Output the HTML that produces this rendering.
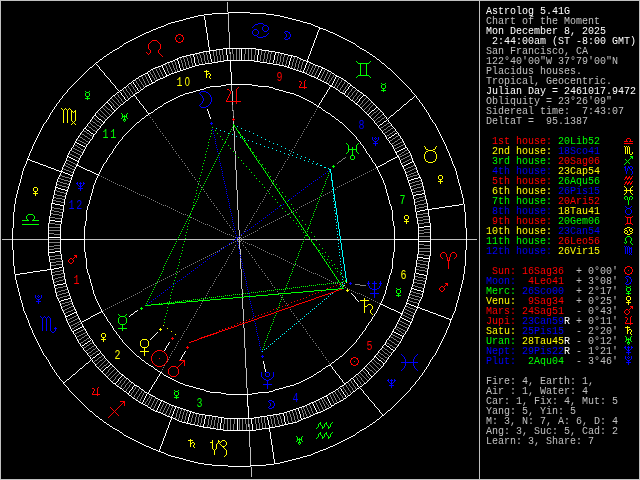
<!DOCTYPE html>
<html><head><meta charset="utf-8"><title>Astrolog 5.41G</title>
<style>
html,body{margin:0;padding:0;background:#000;overflow:hidden}
svg{display:block;will-change:transform}
.sb{font-family:"Liberation Mono",monospace;font-size:10px;white-space:pre}
.hn{font-family:"Liberation Mono",monospace;font-size:13.5px;text-anchor:middle;stroke-width:0}
.hz{font-family:"Liberation Sans",sans-serif;font-size:12.5px}
</style></head><body>
<svg width="640" height="480" viewBox="0 0 640 480">
<g shape-rendering="crispEdges" stroke-width="1" fill="none" transform="translate(0 .5)">
<g id="axes"><path stroke="#c0c0c0" d="M227 2h1M227 3h1M227 4h1M227 5h1M227 6h1M227 7h1M227 8h1M227 9h1M227 10h1M227 11h1M228 13h1M228 14h1M228 15h1M228 16h1M228 17h1M228 18h1M228 19h1M228 20h1M228 21h1M228 22h1M228 23h1M228 24h1M228 25h1M228 26h1M228 27h1M228 28h1M228 29h1M228 30h1M228 31h1M229 32h1M229 33h1M229 34h1M229 35h1M229 36h1M229 37h1M229 38h1M229 39h1M229 40h1M229 41h1M229 42h1M229 43h1M229 44h1M229 45h1M229 46h1M229 47h1M230 52h1M230 53h1M231 85h1M231 86h1M231 87h1M231 88h1M231 89h1M231 90h1M232 91h1M232 92h1M232 93h1M232 94h1M232 95h1M232 96h1M232 97h1M232 98h1M232 99h1M232 100h1M232 102h1M232 103h1M232 104h1M232 110h1M233 116h1M233 117h1M233 121h1M233 122h1M233 123h1M233 126h1M233 127h1M233 128h1M233 129h1M233 130h1M234 131h1M234 132h1M234 133h1M234 134h1M234 135h1M234 136h1M234 137h1M234 138h1M234 139h1M234 140h1M234 141h1M234 142h1M234 143h1M234 144h1M234 145h1M234 146h1M234 147h1M234 148h1M234 149h1M234 150h1M235 151h1M235 152h1M235 153h1M235 155h1M235 156h1M235 157h1M235 158h1M235 159h1M235 160h1M235 161h1M235 162h1M235 163h1M235 164h1M235 165h1M235 166h1M235 167h1M235 168h1M235 169h1M236 170h1M236 171h1M236 172h1M236 173h1M236 174h1M236 175h1M236 176h1M236 177h1M236 178h1M236 179h1M236 180h1M236 181h1M236 182h1M236 183h1M236 184h1M236 185h1M236 186h1M236 187h1M236 188h1M236 189h1M237 190h1M237 191h1M237 192h1M237 193h1M237 194h1M237 195h1M237 196h1M237 197h1M237 198h1M237 199h1M237 200h1M237 201h1M237 202h1M237 203h1M237 204h1M237 205h1M237 206h1M237 207h1M237 208h1M237 209h1M238 210h1M238 211h1M238 212h1M238 213h1M238 214h1M238 215h1M238 216h1M238 217h1M238 218h1M238 219h1M238 220h1M238 221h1M238 222h1M238 223h1M238 224h1M238 225h1M238 226h1M238 227h1M238 228h1M238 229h1M239 230h1M239 231h1M239 232h1M239 233h1M239 234h1M239 235h1M239 237h1M239 238h1M2 239h10M13 239h35M85 239h92M178 239h57M237 239h2M240 239h64M305 239h5M311 239h29M341 239h53M431 239h35M467 239h10M239 240h1M239 241h1M239 242h1M239 243h1M239 244h1M239 245h1M239 246h1M239 247h1M239 248h1M240 249h1M240 250h1M240 251h1M240 252h1M240 253h1M240 254h1M240 256h1M240 258h1M240 259h1M240 260h1M240 261h1M240 262h1M240 263h1M240 264h1M240 265h1M240 266h1M240 267h1M240 268h1M241 269h1M241 270h1M241 271h1M241 272h1M241 273h1M241 274h1M241 275h1M241 276h1M241 277h1M241 278h1M241 279h1M241 280h1M241 281h1M241 282h1M241 283h1M241 284h1M241 285h1M241 286h1M241 287h1M241 288h1M242 289h1M242 290h1M242 291h1M242 292h1M242 293h1M242 294h1M242 295h1M242 296h1M242 298h1M242 299h1M242 300h1M242 301h1M242 302h1M242 303h1M242 304h1M242 305h1M242 306h1M242 307h1M242 308h1M243 309h1M243 310h1M243 311h1M243 312h1M243 313h1M243 314h1M243 315h1M243 316h1M243 317h1M243 318h1M243 319h1M243 320h1M243 322h1M243 324h1M243 325h1M243 326h1M243 327h1M244 328h1M244 329h1M244 330h1M244 331h1M244 332h1M244 333h1M244 334h1M244 335h1M244 336h1M244 337h1M244 338h1M244 339h1M244 340h1M244 341h1M244 342h1M244 343h1M244 344h1M244 345h1M244 346h1M244 347h1M245 348h1M245 349h1M245 350h1M245 351h1M245 352h1M245 353h1M245 354h1M245 355h1M245 356h1M245 357h1M245 358h1M245 359h1M245 360h1M245 361h1M245 362h1M245 363h1M245 364h1M245 365h1M245 366h1M245 367h1M246 368h1M246 369h1M246 370h1M246 371h1M246 372h1M246 373h1M246 374h1M246 375h1M246 376h1M246 377h1M246 378h1M246 379h1M246 380h1M246 381h1M246 382h1M246 383h1M246 384h1M246 385h1M246 386h1M246 387h1M247 388h1M247 389h1M247 390h1M247 391h1M247 392h1M247 393h1M247 406h1M248 424h1M248 425h1M248 426h1M249 431h1M249 432h1M249 433h1M249 434h1M249 435h1M249 436h1M249 437h1M249 438h1M249 439h1M249 440h1M249 441h1M249 442h1M249 443h1M249 444h1M249 445h1M249 446h1M250 447h1M250 448h1M250 449h1M250 450h1M250 451h1M250 452h1M250 453h1M250 454h1M250 455h1M250 456h1M250 457h1M250 458h1M250 459h1M250 460h1M250 461h1M250 462h1M250 463h1M250 464h1M250 466h1M251 467h1M251 468h1M251 469h1M251 470h1M251 471h1M251 472h1M251 473h1M251 474h1M251 475h1M251 476h1"/></g>
<g id="ticks"><path stroke="#ffffff" d="M226 49h1M241 49h1M226 50h1M241 50h1M258 50h1M226 51h1M241 51h1M258 51h1M209 52h1M226 52h1M241 52h1M258 52h1M209 53h1M226 53h1M241 53h1M258 53h1M275 53h1M210 54h1M226 54h1M241 54h1M258 54h1M275 54h1M193 55h1M210 55h1M227 55h1M241 55h1M257 55h1M274 55h1M193 56h1M210 56h1M227 56h1M241 56h1M257 56h1M274 56h1M291 56h1M194 57h1M210 57h1M227 57h1M241 57h1M257 57h1M274 57h1M291 57h1M194 58h1M210 58h1M227 58h1M241 58h1M257 58h1M274 58h1M290 58h1M177 59h1M194 59h1M211 59h1M227 59h1M241 59h1M257 59h1M274 59h1M290 59h1M177 60h1M194 60h1M211 60h1M257 60h1M273 60h1M290 60h1M178 61h1M194 61h1M211 61h1M273 61h1M289 61h1M178 62h1M194 62h1M273 62h1M289 62h1M307 62h1M178 63h1M195 63h1M289 63h1M306 63h1M179 64h1M195 64h1M289 64h1M306 64h1M179 65h1M288 65h1M305 65h1M162 66h1M179 66h1M288 66h1M305 66h1M162 67h1M179 67h1M305 67h1M163 68h1M180 68h1M304 68h1M322 68h1M163 69h1M180 69h1M304 69h1M321 69h1M164 70h1M303 70h1M321 70h1M164 71h1M303 71h1M320 71h1M165 72h1M320 72h1M147 73h1M165 73h1M319 73h1M148 74h1M166 74h1M319 74h1M148 75h1M166 75h1M318 75h1M149 76h1M318 76h1M336 76h1M149 77h1M317 77h1M335 77h1M150 78h1M335 78h1M150 79h1M334 79h1M151 80h1M334 80h1M151 81h1M333 81h1M133 82h1M152 82h1M333 82h1M133 83h1M332 83h1M134 84h1M332 84h1M135 85h1M331 85h1M350 85h1M135 86h1M349 86h1M136 87h1M348 87h1M137 88h1M348 88h1M137 89h1M347 89h1M138 90h1M346 90h1M345 91h1M120 92h1M345 92h1M121 93h1M344 93h1M121 94h1M122 95h1M363 95h1M123 96h1M362 96h1M124 97h1M361 97h1M124 98h1M360 98h1M125 99h1M359 99h1M359 100h1M358 101h1M107 102h1M357 102h1M108 103h1M356 103h1M109 104h1M110 105h1M111 106h1M111 107h1M376 107h1M112 108h1M375 108h1M113 109h1M374 109h1M114 110h1M372 110h2M371 111h1M370 112h1M369 113h1M368 114h1M95 115h1M96 116h1M97 117h1M98 118h1M99 119h2M101 120h1M386 120h1M102 121h1M384 121h2M103 122h1M383 122h1M382 123h1M380 124h2M379 125h1M85 128h1M86 129h1M87 130h2M89 131h1M90 132h1M91 133h2M395 133h2M93 134h1M394 134h1M392 135h2M391 136h1M389 137h2M388 138h1M76 142h1M77 143h2M79 144h2M81 145h2M83 146h2M405 147h1M403 148h2M401 149h2M399 150h2M397 151h2M396 152h1M68 156h1M69 157h2M71 158h2M73 159h2M75 160h2M77 161h1M412 161h1M410 162h2M408 163h2M406 164h2M404 165h2M403 166h1M62 171h1M63 172h2M65 173h3M68 174h2M70 175h2M418 177h2M414 178h4M411 179h3M409 180h2M56 187h2M58 188h3M61 189h4M65 190h2M422 193h2M416 194h6M414 195h2M52 203h3M55 204h5M60 205h3M425 209h2M420 210h5M417 211h3M50 220h5M55 221h6M424 226h6M419 227h5M49 237h11M419 241h11M55 251h5M49 252h6M418 257h5M423 258h6M59 267h3M54 268h5M52 269h2M416 273h3M419 274h5M424 275h2M63 283h2M57 284h6M55 285h2M412 288h2M414 289h3M417 290h4M421 291h2M68 298h2M64 299h4M61 300h3M60 301h1M407 303h2M409 304h2M411 305h3M414 306h2M416 307h1M74 312h2M72 313h2M70 314h2M68 315h2M66 316h2M401 317h1M402 318h2M404 319h2M406 320h2M408 321h2M410 322h1M82 326h1M80 327h2M78 328h2M76 329h2M74 330h2M73 331h1M393 331h1M394 332h2M396 333h2M398 334h2M400 335h2M402 336h1M90 340h1M88 341h2M87 342h1M85 343h2M84 344h1M385 344h1M82 345h2M386 345h1M387 346h2M389 347h1M390 348h1M391 349h2M393 350h1M99 353h1M97 354h2M96 355h1M95 356h1M375 356h1M93 357h2M376 357h1M92 358h1M377 358h1M378 359h1M379 360h2M381 361h1M382 362h1M383 363h1M110 364h1M109 365h1M108 366h1M106 367h2M105 368h1M364 368h1M104 369h1M365 369h1M103 370h1M366 370h1M102 371h1M367 371h1M368 372h1M368 373h1M369 374h1M122 375h1M370 375h1M121 376h1M371 376h1M120 377h1M119 378h1M118 379h1M353 379h1M118 380h1M354 380h1M117 381h1M354 381h1M116 382h1M355 382h1M115 383h1M356 383h1M357 384h1M134 385h1M357 385h1M133 386h1M358 386h1M132 387h1M132 388h1M340 388h1M131 389h1M341 389h1M130 390h1M341 390h1M129 391h1M342 391h1M129 392h1M343 392h1M128 393h1M343 393h1M146 394h1M344 394h1M146 395h1M345 395h1M145 396h1M326 396h1M345 396h1M145 397h1M327 397h1M144 398h1M327 398h1M144 399h1M328 399h1M143 400h1M328 400h1M143 401h1M161 401h1M329 401h1M142 402h1M160 402h1M329 402h1M160 403h1M312 403h1M330 403h1M159 404h1M313 404h1M330 404h1M159 405h1M313 405h1M331 405h1M158 406h1M314 406h1M158 407h1M175 407h1M314 407h1M157 408h1M175 408h1M315 408h1M157 409h1M174 409h1M298 409h1M315 409h1M156 410h1M174 410h1M298 410h1M316 410h1M173 411h1M299 411h1M316 411h1M173 412h1M190 412h1M299 412h1M317 412h1M173 413h1M190 413h1M299 413h1M172 414h1M189 414h1M283 414h1M300 414h1M172 415h1M189 415h1M283 415h1M300 415h1M171 416h1M189 416h1M205 416h1M284 416h1M300 416h1M188 417h1M205 417h1M267 417h1M284 417h1M300 417h1M188 418h1M205 418h1M221 418h1M267 418h1M284 418h1M301 418h1M188 419h1M204 419h1M221 419h1M237 419h1M251 419h1M267 419h1M284 419h1M188 420h1M204 420h1M221 420h1M237 420h1M251 420h1M268 420h1M284 420h1M187 421h1M204 421h1M221 421h1M237 421h1M251 421h1M268 421h1M284 421h1M187 422h1M204 422h1M221 422h1M237 422h1M251 422h1M268 422h1M285 422h1M204 423h1M220 423h1M237 423h1M251 423h1M268 423h1M285 423h1M203 424h1M220 424h1M237 424h1M252 424h1M268 424h1M203 425h1M220 425h1M237 425h1M252 425h1M269 425h1M203 426h1M220 426h1M237 426h1M252 426h1M269 426h1M220 427h1M237 427h1M252 427h1M220 428h1M237 428h1M252 428h1M237 429h1M252 429h1"/><path stroke="#808080" d="M229 49h1M232 49h1M236 49h1M239 49h1M245 49h1M248 49h1M251 49h1M255 49h1M216 50h1M219 50h1M222 50h1M229 50h1M232 50h1M236 50h1M239 50h1M245 50h1M248 50h1M251 50h1M255 50h1M261 50h1M213 51h1M216 51h1M219 51h1M222 51h1M229 51h1M232 51h1M236 51h1M239 51h1M245 51h1M248 51h1M251 51h1M255 51h1M261 51h1M265 51h1M268 51h1M203 52h1M206 52h1M213 52h1M216 52h1M219 52h1M222 52h1M229 52h1M232 52h1M236 52h1M239 52h1M245 52h1M248 52h1M251 52h1M255 52h1M261 52h1M265 52h1M268 52h1M271 52h1M199 53h1M203 53h1M206 53h1M213 53h1M216 53h1M219 53h1M222 53h1M229 53h1M232 53h1M236 53h1M239 53h1M245 53h1M248 53h1M251 53h1M255 53h1M261 53h1M264 53h1M268 53h1M271 53h1M278 53h1M196 54h1M199 54h1M203 54h1M206 54h1M213 54h1M216 54h1M219 54h1M222 54h1M230 54h1M233 54h1M236 54h1M239 54h1M244 54h1M248 54h1M251 54h1M255 54h1M261 54h1M264 54h1M267 54h1M270 54h1M278 54h1M281 54h1M190 55h1M196 55h1M200 55h1M204 55h1M207 55h1M213 55h1M216 55h1M220 55h1M223 55h1M230 55h1M233 55h1M236 55h1M239 55h1M244 55h1M248 55h1M251 55h1M254 55h1M260 55h1M264 55h1M267 55h1M270 55h1M278 55h1M281 55h1M284 55h1M186 56h1M190 56h1M197 56h1M200 56h1M204 56h1M207 56h1M214 56h1M217 56h1M220 56h1M223 56h1M230 56h1M233 56h1M236 56h1M239 56h1M244 56h1M248 56h1M251 56h1M254 56h1M260 56h1M264 56h1M267 56h1M270 56h1M277 56h1M280 56h1M284 56h1M288 56h1M183 57h1M186 57h1M190 57h1M197 57h1M200 57h1M204 57h1M207 57h1M214 57h1M217 57h1M220 57h1M223 57h1M230 57h1M233 57h1M236 57h1M239 57h1M244 57h1M248 57h1M251 57h1M254 57h1M260 57h1M264 57h1M267 57h1M270 57h1M277 57h1M280 57h1M283 57h1M287 57h1M294 57h1M180 58h1M183 58h1M187 58h1M191 58h1M197 58h1M201 58h1M204 58h1M207 58h1M214 58h1M217 58h1M220 58h1M223 58h1M230 58h1M233 58h1M236 58h1M239 58h1M244 58h1M248 58h1M251 58h1M254 58h1M260 58h1M264 58h1M267 58h1M270 58h1M277 58h1M280 58h1M283 58h1M287 58h1M294 58h1M297 58h1M180 59h1M184 59h1M187 59h1M191 59h1M198 59h1M201 59h1M204 59h1M207 59h1M214 59h1M217 59h1M220 59h1M223 59h1M230 59h1M233 59h1M236 59h1M239 59h1M244 59h1M248 59h1M251 59h1M254 59h1M260 59h1M263 59h1M266 59h1M270 59h1M277 59h1M280 59h1M283 59h1M287 59h1M293 59h1M297 59h1M300 59h1M181 60h1M184 60h1M187 60h1M191 60h1M198 60h1M201 60h1M204 60h1M208 60h1M214 60h1M217 60h1M220 60h1M223 60h1M254 60h1M260 60h1M263 60h1M266 60h1M269 60h1M277 60h1M280 60h1M283 60h1M286 60h1M293 60h1M296 60h1M300 60h1M174 61h1M181 61h1M184 61h1M188 61h1M191 61h1M198 61h1M201 61h1M205 61h1M208 61h1M214 61h1M217 61h1M263 61h1M266 61h1M269 61h1M276 61h1M280 61h1M283 61h1M286 61h1M293 61h1M296 61h1M299 61h1M303 61h1M171 62h1M175 62h1M181 62h1M185 62h1M188 62h1M191 62h1M198 62h1M202 62h1M205 62h1M208 62h1M269 62h1M276 62h1M279 62h1M282 62h1M286 62h1M292 62h1M296 62h1M299 62h1M302 62h1M168 63h1M172 63h1M175 63h1M182 63h1M185 63h1M188 63h1M192 63h1M199 63h1M202 63h1M276 63h1M279 63h1M282 63h1M286 63h1M292 63h1M295 63h1M299 63h1M302 63h1M310 63h1M165 64h1M168 64h1M172 64h1M175 64h1M182 64h1M185 64h1M188 64h1M192 64h1M279 64h1M282 64h1M285 64h1M292 64h1M295 64h1M298 64h1M302 64h1M309 64h1M165 65h1M169 65h1M173 65h1M176 65h1M182 65h1M185 65h1M189 65h1M192 65h1M285 65h1M292 65h1M295 65h1M298 65h1M301 65h1M309 65h1M313 65h1M166 66h1M169 66h1M173 66h1M176 66h1M182 66h1M186 66h1M189 66h1M291 66h1M295 66h1M298 66h1M301 66h1M308 66h1M312 66h1M315 66h1M158 67h1M166 67h1M170 67h1M173 67h1M176 67h1M183 67h1M186 67h1M291 67h1M294 67h1M298 67h1M301 67h1M308 67h1M312 67h1M315 67h1M318 67h1M155 68h1M159 68h1M167 68h1M170 68h1M174 68h1M176 68h1M183 68h1M294 68h1M297 68h1M301 68h1M308 68h1M311 68h1M314 68h1M318 68h1M156 69h1M159 69h1M167 69h1M171 69h1M174 69h1M177 69h1M297 69h1M300 69h1M307 69h1M311 69h1M314 69h1M317 69h1M152 70h1M156 70h1M160 70h1M167 70h1M171 70h1M175 70h1M177 70h1M300 70h1M307 70h1M310 70h1M313 70h1M317 70h1M324 70h1M153 71h1M157 71h1M160 71h1M168 71h1M172 71h1M175 71h1M306 71h1M310 71h1M313 71h1M316 71h1M324 71h1M328 71h1M150 72h1M153 72h1M157 72h1M161 72h1M168 72h1M172 72h1M306 72h1M309 72h1M312 72h1M316 72h1M323 72h1M327 72h1M150 73h1M154 73h1M158 73h1M161 73h1M169 73h1M309 73h1M312 73h1M315 73h1M323 73h1M327 73h1M330 73h1M151 74h1M154 74h1M158 74h1M162 74h1M311 74h1M315 74h1M322 74h1M326 74h1M330 74h1M145 75h1M152 75h1M155 75h1M159 75h1M162 75h1M311 75h1M314 75h1M322 75h1M326 75h1M329 75h1M333 75h1M141 76h1M145 76h1M152 76h1M155 76h1M159 76h1M163 76h1M314 76h1M321 76h1M325 76h1M329 76h1M333 76h1M142 77h1M146 77h1M153 77h1M156 77h1M160 77h1M321 77h1M325 77h1M328 77h1M332 77h1M138 78h1M142 78h1M146 78h1M154 78h1M156 78h1M320 78h1M324 78h1M328 78h1M331 78h1M338 78h1M139 79h1M143 79h1M147 79h1M154 79h1M157 79h1M320 79h1M324 79h1M327 79h1M331 79h1M338 79h1M342 79h1M135 80h1M139 80h1M143 80h1M147 80h1M155 80h1M323 80h1M327 80h1M330 80h1M337 80h1M341 80h1M136 81h1M140 81h1M144 81h1M148 81h1M326 81h1M329 81h1M337 81h1M341 81h1M345 81h1M136 82h1M141 82h1M144 82h1M148 82h1M326 82h1M329 82h1M336 82h1M340 82h1M344 82h1M137 83h1M141 83h1M145 83h1M149 83h1M328 83h1M336 83h1M339 83h1M344 83h1M131 84h1M138 84h1M142 84h1M145 84h1M335 84h1M339 84h1M343 84h1M347 84h1M131 85h1M138 85h1M143 85h1M146 85h1M335 85h1M338 85h1M342 85h1M347 85h1M128 86h1M132 86h1M139 86h1M143 86h1M334 86h1M337 86h1M342 86h1M346 86h1M128 87h1M133 87h1M140 87h1M337 87h1M341 87h1M345 87h1M125 88h1M129 88h1M133 88h1M140 88h1M336 88h1M340 88h1M345 88h1M352 88h1M126 89h1M130 89h1M134 89h1M340 89h1M344 89h1M351 89h1M123 90h1M126 90h1M130 90h1M135 90h1M339 90h1M343 90h1M351 90h1M355 90h1M123 91h1M127 91h1M131 91h1M135 91h1M343 91h1M350 91h1M354 91h1M358 91h1M124 92h1M128 92h1M132 92h1M136 92h1M342 92h1M349 92h1M353 92h1M357 92h1M125 93h1M129 93h1M132 93h1M348 93h1M352 93h1M356 93h1M361 93h1M117 94h1M125 94h1M129 94h1M133 94h1M348 94h1M352 94h1M356 94h1M360 94h1M118 95h1M126 95h1M130 95h1M347 95h1M351 95h1M355 95h1M359 95h1M114 96h1M118 96h1M127 96h1M350 96h1M354 96h1M358 96h1M115 97h1M119 97h1M127 97h1M349 97h1M353 97h1M357 97h1M366 97h1M111 98h1M116 98h1M120 98h1M128 98h1M353 98h1M357 98h1M365 98h1M112 99h1M117 99h1M121 99h1M352 99h1M356 99h1M364 99h1M109 100h1M113 100h1M118 100h1M121 100h1M355 100h1M363 100h1M368 100h1M110 101h1M114 101h1M118 101h1M122 101h1M354 101h1M362 101h1M367 101h1M111 102h1M115 102h1M119 102h1M123 102h1M362 102h1M366 102h1M371 102h1M112 103h1M116 103h1M120 103h1M361 103h1M365 103h1M370 103h1M113 104h1M117 104h1M360 104h1M364 104h1M369 104h1M373 104h1M104 105h1M113 105h1M118 105h1M359 105h1M363 105h1M368 105h1M372 105h1M105 106h1M114 106h1M362 106h1M367 106h1M371 106h1M102 107h1M106 107h1M115 107h1M361 107h1M366 107h1M370 107h1M103 108h1M107 108h1M116 108h1M365 108h1M369 108h1M104 109h1M108 109h2M364 109h1M369 109h1M378 109h1M100 110h1M105 110h1M110 110h1M368 110h1M377 110h1M101 111h1M106 111h1M111 111h1M367 111h1M376 111h1M380 111h1M97 112h1M102 112h1M107 112h1M112 112h1M366 112h1M374 112h2M379 112h1M98 113h1M103 113h1M108 113h1M373 113h1M378 113h1M99 114h1M104 114h1M109 114h1M372 114h1M377 114h1M382 114h1M100 115h1M105 115h1M371 115h1M376 115h1M381 115h1M101 116h2M106 116h1M370 116h1M375 116h1M380 116h1M93 117h1M103 117h1M107 117h1M374 117h1M378 117h2M384 117h1M94 118h1M104 118h1M373 118h1M377 118h1M382 118h2M95 119h1M105 119h1M376 119h1M381 119h1M91 120h1M96 120h1M375 120h1M380 120h1M92 121h1M97 121h2M378 121h2M93 122h2M99 122h1M377 122h1M90 123h1M95 123h1M100 123h1M376 123h1M387 123h2M91 124h1M96 124h1M101 124h1M386 124h1M92 125h1M97 125h2M384 125h2M390 125h1M88 126h1M93 126h2M99 126h1M383 126h1M388 126h2M89 127h2M95 127h1M381 127h2M387 127h1M91 128h1M96 128h1M380 128h1M386 128h1M391 128h2M92 129h1M97 129h1M384 129h2M390 129h1M93 130h2M383 130h1M388 130h2M84 131h2M95 131h1M387 131h1M393 131h2M86 132h1M385 132h2M392 132h1M81 133h1M87 133h2M384 133h1M390 133h2M82 134h2M89 134h1M389 134h1M84 135h1M90 135h2M387 135h2M398 135h1M79 136h1M85 136h2M92 136h1M386 136h1M396 136h2M80 137h2M87 137h1M395 137h1M82 138h1M88 138h2M393 138h2M400 138h1M77 139h1M83 139h2M90 139h1M392 139h1M398 139h2M78 140h2M85 140h1M390 140h2M397 140h1M80 141h2M86 141h2M395 141h2M402 141h1M82 142h2M88 142h1M394 142h1M400 142h2M84 143h2M392 143h2M398 143h2M86 144h1M396 144h2M403 144h1M75 145h2M394 145h2M401 145h2M77 146h1M393 146h1M399 146h2M78 147h2M397 147h2M73 148h2M80 148h1M395 148h2M75 149h2M81 149h2M71 150h1M77 150h2M83 150h1M405 150h2M72 151h2M79 151h2M404 151h1M74 152h2M81 152h2M402 152h2M408 152h1M69 153h1M76 153h2M401 153h1M406 153h2M70 154h2M78 154h2M399 154h2M404 154h2M72 155h2M80 155h1M398 155h1M402 155h2M409 155h2M74 156h2M400 156h2M407 156h2M76 157h2M399 157h1M405 157h2M78 158h1M403 158h2M411 158h1M401 159h2M409 159h2M67 160h2M407 160h2M69 161h2M405 161h2M71 162h2M403 162h2M66 163h2M73 163h2M402 163h1M68 164h2M75 164h2M64 165h2M70 165h2M413 165h2M66 166h2M72 166h2M411 166h2M68 167h2M74 167h1M408 167h3M63 168h1M70 168h2M406 168h2M414 168h2M64 169h2M72 169h2M405 169h1M412 169h2M66 170h3M410 170h2M69 171h2M408 171h2M416 171h1M71 172h2M406 172h2M414 172h2M411 173h3M409 174h2M417 174h1M60 175h2M407 175h2M413 175h4M62 176h3M410 176h3M65 177h4M408 177h2M59 178h2M69 178h2M61 179h3M64 180h4M419 180h2M58 181h2M68 181h2M415 181h4M60 182h3M412 182h3M63 183h4M410 183h2M420 183h2M57 184h2M67 184h2M416 184h4M59 185h3M413 185h3M62 186h4M411 186h2M421 186h2M66 187h2M417 187h4M414 188h3M412 189h2M55 190h2M421 190h3M57 191h3M416 191h5M60 192h4M413 192h3M64 193h2M55 194h2M57 195h5M62 196h3M423 196h2M54 197h2M419 197h4M56 198h6M416 198h3M62 199h2M415 199h1M424 199h2M53 200h3M420 200h4M56 201h5M417 201h3M61 202h3M415 202h2M424 203h3M418 204h6M416 205h2M424 206h3M52 207h2M419 207h5M54 208h6M416 208h3M60 209h3M51 210h3M54 211h5M59 212h3M51 213h2M423 213h5M53 214h6M417 214h6M59 215h3M423 216h6M50 217h5M417 217h6M55 218h6M423 219h6M418 220h5M424 222h5M49 223h6M418 223h6M55 224h5M49 227h11M424 229h6M49 230h11M419 230h5M424 232h6M49 233h5M419 233h5M54 234h6M419 236h11M49 239h11M419 239h11M49 242h11M419 244h5M54 245h6M424 245h6M49 246h5M54 248h6M419 248h11M49 249h5M419 251h11M418 254h6M55 255h6M424 255h6M50 256h5M55 258h6M50 259h5M418 260h5M56 261h6M423 261h6M51 262h5M417 263h3M56 264h6M420 264h6M51 265h5M426 265h2M417 266h3M420 267h5M425 268h3M416 269h3M60 270h3M419 270h6M55 271h5M425 271h2M52 272h3M61 273h3M55 274h6M53 275h2M62 276h2M415 276h3M58 277h4M418 277h5M55 278h3M423 278h3M53 279h2M63 279h2M414 279h3M59 280h4M417 280h6M56 281h3M423 281h2M54 282h2M414 282h3M417 283h5M422 284h2M413 285h2M63 286h3M415 286h3M58 287h5M418 287h4M56 288h2M422 288h1M65 289h2M61 290h4M58 291h3M411 291h2M56 292h2M66 292h2M413 292h3M62 293h4M416 293h4M59 294h3M410 294h2M420 294h2M57 295h2M67 295h2M412 295h3M63 296h4M415 296h4M60 297h3M409 297h2M419 297h2M58 298h2M411 298h3M414 299h4M408 300h2M418 300h2M69 301h2M410 301h3M65 302h4M413 302h4M62 303h3M70 303h2M417 303h1M61 304h1M68 304h2M65 305h3M63 306h2M71 306h2M406 306h2M62 307h1M69 307h2M408 307h2M67 308h2M410 308h3M65 309h2M73 309h2M405 309h2M413 309h2M63 310h2M71 310h2M407 310h2M415 310h1M68 311h3M403 311h1M409 311h2M66 312h2M404 312h2M411 312h2M65 313h1M406 313h2M413 313h1M402 314h1M408 314h2M76 315h1M403 315h2M410 315h2M74 316h2M405 316h2M412 316h1M72 317h2M407 317h2M70 318h2M77 318h2M409 318h2M68 319h2M75 319h2M411 319h1M67 320h1M73 320h2M399 320h1M71 321h2M79 321h1M400 321h2M69 322h2M77 322h2M402 322h2M75 323h2M80 323h1M398 323h1M404 323h2M73 324h2M78 324h2M399 324h2M406 324h2M71 325h2M77 325h1M401 325h2M408 325h1M70 326h1M75 326h2M396 326h1M403 326h2M74 327h1M397 327h2M405 327h2M72 328h2M395 328h1M399 328h2M407 328h1M83 329h2M396 329h2M401 329h2M81 330h2M398 330h1M403 330h2M79 331h2M399 331h2M405 331h1M77 332h2M85 332h1M401 332h1M75 333h2M83 333h2M402 333h2M81 334h2M392 334h1M79 335h2M85 335h2M393 335h2M77 336h2M84 336h1M390 336h1M395 336h2M82 337h2M391 337h2M397 337h2M81 338h1M87 338h2M393 338h1M399 338h2M79 339h2M86 339h1M388 339h1M394 339h2M78 340h1M84 340h2M389 340h2M396 340h1M83 341h1M391 341h1M397 341h2M81 342h2M92 342h1M386 342h1M392 342h2M399 342h1M80 343h1M90 343h2M387 343h2M394 343h1M89 344h1M389 344h1M395 344h2M87 345h2M94 345h1M390 345h2M397 345h1M86 346h1M92 346h2M392 346h1M84 347h2M91 347h1M383 347h1M393 347h2M89 348h2M95 348h1M384 348h1M88 349h1M93 349h2M381 349h1M385 349h2M86 350h2M92 350h1M98 350h1M382 350h1M387 350h1M91 351h1M96 351h2M383 351h1M388 351h1M89 352h2M95 352h1M379 352h1M384 352h1M389 352h2M88 353h1M93 353h2M380 353h1M385 353h2M92 354h1M377 354h1M381 354h2M387 354h1M90 355h2M102 355h1M378 355h1M383 355h1M388 355h1M101 356h1M379 356h1M384 356h1M99 357h2M380 357h1M385 357h2M98 358h1M103 358h1M381 358h2M387 358h1M97 359h1M102 359h1M373 359h1M383 359h1M95 360h2M100 360h2M105 360h1M374 360h1M384 360h1M94 361h1M99 361h1M104 361h1M371 361h1M375 361h1M385 361h1M98 362h1M103 362h1M108 362h1M372 362h1M376 362h1M97 363h1M102 363h1M107 363h1M373 363h1M377 363h2M96 364h1M101 364h1M106 364h1M369 364h1M374 364h1M379 364h1M100 365h1M104 365h2M370 365h1M375 365h1M380 365h1M99 366h1M103 366h1M112 366h1M366 366h1M371 366h1M376 366h1M381 366h1M98 367h1M102 367h1M111 367h1M367 367h1M372 367h1M377 367h1M101 368h1M110 368h1M368 368h1M373 368h1M378 368h1M100 369h1M109 369h1M114 369h1M369 369h1M374 369h1M108 370h1M113 370h1M362 370h1M370 370h2M375 370h1M108 371h1M112 371h1M117 371h1M363 371h1M372 371h1M376 371h1M107 372h1M111 372h1M116 372h1M364 372h1M373 372h1M106 373h1M110 373h1M115 373h1M119 373h1M360 373h1M365 373h1M374 373h1M105 374h1M109 374h1M114 374h1M118 374h1M361 374h1M366 374h1M108 375h1M113 375h1M117 375h1M358 375h1M362 375h1M366 375h1M107 376h1M112 376h1M116 376h1M355 376h1M359 376h1M363 376h1M367 376h1M111 377h1M115 377h1M124 377h1M356 377h1M360 377h1M364 377h1M368 377h1M110 378h1M115 378h1M123 378h1M357 378h1M361 378h1M365 378h1M369 378h1M114 379h1M122 379h1M126 379h1M357 379h1M361 379h1M366 379h1M113 380h1M121 380h1M125 380h1M350 380h1M358 380h1M362 380h1M367 380h1M112 381h1M120 381h1M124 381h1M129 381h1M351 381h1M359 381h1M363 381h1M120 382h1M124 382h1M128 382h1M351 382h1M360 382h1M364 382h1M119 383h1M123 383h1M127 383h1M131 383h1M348 383h1M352 383h1M360 383h1M118 384h1M122 384h1M126 384h1M130 384h1M345 384h1M349 384h1M353 384h1M361 384h1M117 385h1M121 385h1M125 385h1M129 385h1M346 385h1M349 385h1M353 385h1M121 386h1M125 386h1M129 386h1M136 386h1M342 386h1M346 386h1M350 386h1M354 386h1M120 387h1M124 387h1M128 387h1M135 387h1M343 387h1M347 387h1M351 387h1M355 387h1M123 388h1M127 388h1M135 388h1M139 388h1M343 388h1M348 388h1M352 388h1M355 388h1M126 389h1M134 389h1M138 389h1M344 389h1M348 389h1M352 389h1M126 390h1M133 390h1M138 390h1M142 390h1M338 390h1M345 390h1M349 390h1M353 390h1M133 391h1M137 391h1M141 391h1M338 391h1M345 391h1M350 391h1M132 392h1M136 392h1M141 392h1M144 392h1M335 392h1M339 392h1M346 392h1M350 392h1M131 393h1M136 393h1M140 393h1M143 393h1M332 393h1M335 393h1M340 393h1M347 393h1M131 394h1M135 394h1M139 394h1M143 394h1M329 394h1M333 394h1M336 394h1M340 394h1M347 394h1M134 395h1M139 395h1M142 395h1M150 395h1M330 395h1M333 395h1M337 395h1M341 395h1M134 396h1M138 396h1M142 396h1M149 396h1M152 396h1M330 396h1M334 396h1M337 396h1M342 396h1M133 397h1M137 397h1M141 397h1M149 397h1M151 397h1M331 397h1M334 397h1M338 397h1M342 397h1M137 398h1M141 398h1M148 398h1M151 398h1M155 398h1M323 398h1M331 398h1M335 398h1M339 398h1M343 398h1M136 399h1M140 399h1M147 399h1M150 399h1M154 399h1M321 399h1M324 399h1M332 399h1M335 399h1M339 399h1M140 400h1M147 400h1M150 400h1M154 400h1M157 400h1M318 400h1M322 400h1M324 400h1M332 400h1M336 400h1M340 400h1M139 401h1M146 401h1M149 401h1M153 401h1M157 401h1M319 401h1M322 401h1M325 401h1M333 401h1M336 401h1M145 402h1M149 402h1M153 402h1M156 402h1M164 402h1M315 402h1M319 402h1M323 402h1M326 402h1M333 402h1M145 403h1M148 403h1M152 403h1M156 403h1M163 403h1M316 403h1M320 403h1M323 403h1M326 403h1M334 403h1M148 404h1M152 404h1M155 404h1M163 404h1M166 404h1M309 404h1M316 404h1M320 404h1M324 404h1M327 404h1M147 405h1M151 405h1M155 405h1M162 405h1M166 405h1M169 405h1M309 405h1M317 405h1M321 405h1M324 405h1M328 405h1M151 406h1M154 406h1M162 406h1M165 406h1M169 406h1M172 406h1M306 406h1M310 406h1M317 406h1M321 406h1M325 406h1M328 406h1M150 407h1M154 407h1M161 407h1M165 407h1M168 407h1M172 407h1M303 407h1M306 407h1M310 407h1M318 407h1M322 407h1M325 407h1M153 408h1M161 408h1M164 408h1M168 408h1M171 408h1M178 408h1M301 408h1M303 408h1M307 408h1M311 408h1M318 408h1M322 408h1M326 408h1M153 409h1M160 409h1M164 409h1M167 409h1M171 409h1M178 409h1M181 409h1M301 409h1M304 409h1M307 409h1M311 409h1M319 409h1M323 409h1M160 410h1M163 410h1M167 410h1M170 410h1M177 410h1M181 410h1M184 410h1M295 410h1M302 410h1M304 410h1M308 410h1M311 410h1M319 410h1M159 411h1M163 411h1M166 411h1M170 411h1M177 411h1M180 411h1M184 411h1M187 411h1M292 411h1M295 411h1M302 411h1M305 411h1M308 411h1M312 411h1M320 411h1M162 412h1M166 412h1M170 412h1M177 412h1M180 412h1M183 412h1M187 412h1M289 412h1M292 412h1M296 412h1M302 412h1M305 412h1M309 412h1M312 412h1M165 413h1M169 413h1M176 413h1M180 413h1M183 413h1M186 413h1M193 413h1M286 413h1M289 413h1M293 413h1M296 413h1M303 413h1M305 413h1M309 413h1M313 413h1M165 414h1M169 414h1M176 414h1M179 414h1M183 414h1M186 414h1M193 414h1M196 414h1M279 414h1M286 414h1M290 414h1M293 414h1M296 414h1M303 414h1M306 414h1M310 414h1M168 415h1M176 415h1M179 415h1M182 415h1M186 415h1M192 415h1M196 415h1M199 415h1M202 415h1M273 415h1M276 415h1M279 415h1M286 415h1M290 415h1M293 415h1M297 415h1M303 415h1M306 415h1M310 415h1M176 416h1M179 416h1M182 416h1M185 416h1M192 416h1M196 416h1M199 416h1M202 416h1M209 416h1M270 416h1M273 416h1M276 416h1M280 416h1M287 416h1M290 416h1M294 416h1M297 416h1M303 416h1M307 416h1M175 417h1M179 417h1M182 417h1M185 417h1M192 417h1M195 417h1M198 417h1M202 417h1M209 417h1M212 417h1M215 417h1M261 417h1M264 417h1M270 417h1M273 417h1M277 417h1M280 417h1M287 417h1M291 417h1M294 417h1M297 417h1M304 417h1M175 418h1M178 418h1M182 418h1M185 418h1M191 418h1M195 418h1M198 418h1M201 418h1M209 418h1M212 418h1M215 418h1M218 418h1M255 418h1M258 418h1M261 418h1M264 418h1M270 418h1M274 418h1M277 418h1M280 418h1M287 418h1M291 418h1M294 418h1M297 418h1M178 419h1M181 419h1M185 419h1M191 419h1M195 419h1M198 419h1M201 419h1M208 419h1M212 419h1M215 419h1M218 419h1M224 419h1M227 419h1M230 419h1M234 419h1M239 419h1M242 419h1M245 419h1M248 419h1M255 419h1M258 419h1M261 419h1M264 419h1M271 419h1M274 419h1M277 419h1M281 419h1M287 419h1M291 419h1M294 419h1M298 419h1M181 420h1M184 420h1M191 420h1M195 420h1M198 420h1M201 420h1M208 420h1M211 420h1M214 420h1M218 420h1M224 420h1M227 420h1M230 420h1M234 420h1M239 420h1M242 420h1M245 420h1M248 420h1M255 420h1M258 420h1M261 420h1M264 420h1M271 420h1M274 420h1M278 420h1M281 420h1M287 420h1M291 420h1M295 420h1M298 420h1M184 421h1M191 421h1M195 421h1M198 421h1M201 421h1M208 421h1M211 421h1M214 421h1M218 421h1M224 421h1M227 421h1M230 421h1M234 421h1M239 421h1M242 421h1M245 421h1M248 421h1M255 421h1M258 421h1M261 421h1M264 421h1M271 421h1M274 421h1M278 421h1M281 421h1M288 421h1M292 421h1M295 421h1M190 422h1M194 422h1M198 422h1M201 422h1M208 422h1M211 422h1M214 422h1M218 422h1M224 422h1M227 422h1M230 422h1M234 422h1M239 422h1M242 422h1M245 422h1M248 422h1M255 422h1M258 422h1M261 422h1M264 422h1M271 422h1M274 422h1M278 422h1M281 422h1M288 422h1M292 422h1M190 423h1M194 423h1M197 423h1M200 423h1M208 423h1M211 423h1M214 423h1M217 423h1M224 423h1M227 423h1M230 423h1M234 423h1M239 423h1M242 423h1M245 423h1M248 423h1M255 423h1M259 423h1M262 423h1M265 423h1M271 423h1M274 423h1M278 423h1M282 423h1M197 424h1M200 424h1M208 424h1M211 424h1M214 424h1M217 424h1M223 424h1M227 424h1M230 424h1M233 424h1M239 424h1M242 424h1M246 424h1M249 424h1M256 424h1M259 424h1M262 424h1M265 424h1M272 424h1M275 424h1M279 424h1M282 424h1M200 425h1M207 425h1M210 425h1M214 425h1M217 425h1M223 425h1M227 425h1M230 425h1M233 425h1M239 425h1M242 425h1M246 425h1M249 425h1M256 425h1M259 425h1M262 425h1M265 425h1M272 425h1M275 425h1M279 425h1M207 426h1M210 426h1M213 426h1M217 426h1M223 426h1M227 426h1M230 426h1M233 426h1M239 426h1M242 426h1M246 426h1M249 426h1M256 426h1M259 426h1M262 426h1M265 426h1M272 426h1M210 427h1M213 427h1M217 427h1M223 427h1M227 427h1M230 427h1M233 427h1M239 427h1M242 427h1M246 427h1M249 427h1M256 427h1M259 427h1M262 427h1M265 427h1M217 428h1M223 428h1M227 428h1M230 428h1M233 428h1M239 428h1M242 428h1M246 428h1M249 428h1M256 428h1M259 428h1M223 429h1M227 429h1M230 429h1M233 429h1M239 429h1M242 429h1M246 429h1M249 429h1"/></g>
<g id="rings"><path stroke="#ffffff" d="M228 12h22M212 13h16M250 13h16M204 14h8M266 14h8M198 15h6M274 15h6M194 16h4M280 16h4M190 17h4M284 17h4M186 18h4M288 18h4M183 19h3M292 19h4M179 20h4M296 20h4M175 21h4M300 21h3M171 22h4M303 22h4M168 23h3M307 23h4M166 24h2M311 24h2M164 25h2M313 25h2M161 26h3M315 26h3M158 27h3M318 27h2M156 28h2M320 28h3M153 29h3M323 29h3M151 30h2M326 30h2M149 31h2M328 31h2M146 32h3M330 32h3M144 33h2M333 33h2M142 34h2M335 34h2M140 35h2M337 35h2M138 36h2M339 36h2M136 37h2M341 37h2M134 38h2M343 38h2M132 39h2M345 39h2M130 40h2M347 40h2M128 41h2M349 41h2M126 42h2M351 42h2M124 43h2M353 43h2M123 44h1M355 44h1M122 45h1M356 45h1M120 46h2M357 46h2M119 47h1M359 47h1M117 48h2M223 48h33M360 48h2M115 49h2M216 49h7M256 49h6M362 49h2M113 50h2M210 50h6M262 50h7M364 50h2M112 51h1M203 51h7M269 51h6M366 51h1M110 52h2M199 52h4M275 52h5M367 52h2M109 53h1M195 53h4M280 53h4M369 53h1M107 54h2M190 54h5M284 54h4M370 54h2M106 55h1M186 55h4M288 55h5M372 55h1M104 56h2M182 56h4M293 56h4M373 56h2M103 57h1M179 57h3M297 57h2M375 57h1M102 58h1M177 58h2M299 58h2M376 58h1M100 59h2M175 59h2M301 59h2M377 59h2M99 60h1M173 60h2M224 60h30M303 60h3M379 60h1M98 61h1M170 61h3M218 61h6M254 61h6M306 61h3M380 61h1M96 62h2M167 62h3M212 62h6M260 62h7M309 62h2M381 62h1M95 63h1M165 63h2M205 63h7M267 63h6M311 63h2M382 63h2M94 64h1M163 64h2M199 64h6M273 64h6M313 64h2M384 64h1M93 65h1M161 65h2M195 65h4M279 65h5M315 65h3M385 65h1M92 66h1M158 66h3M192 66h3M284 66h3M318 66h3M386 66h1M90 67h2M155 67h3M189 67h3M287 67h3M321 67h2M387 67h1M89 68h1M153 68h2M186 68h3M290 68h3M323 68h2M388 68h2M88 69h1M151 69h2M183 69h3M293 69h3M325 69h2M390 69h1M87 70h1M150 70h1M180 70h3M296 70h3M327 70h2M391 70h1M86 71h1M148 71h2M177 71h3M299 71h3M329 71h2M392 71h1M85 72h1M147 72h1M174 72h3M302 72h3M331 72h1M393 72h1M84 73h1M145 73h2M171 73h3M305 73h2M332 73h2M394 73h1M83 74h1M143 74h2M169 74h2M307 74h2M334 74h1M395 74h1M82 75h1M141 75h2M167 75h2M309 75h2M335 75h2M396 75h1M81 76h1M139 76h2M165 76h2M311 76h3M337 76h2M397 76h1M80 77h1M138 77h1M163 77h2M314 77h2M339 77h2M398 77h1M79 78h1M136 78h2M160 78h3M316 78h2M341 78h2M399 78h1M78 79h1M135 79h1M158 79h2M318 79h2M343 79h1M400 79h1M77 80h1M133 80h2M156 80h2M320 80h2M344 80h2M401 80h1M76 81h1M132 81h1M155 81h1M322 81h2M346 81h1M402 81h1M75 82h1M131 82h1M153 82h2M324 82h2M347 82h1M403 82h1M74 83h1M129 83h2M151 83h2M326 83h2M348 83h2M404 83h1M73 84h1M128 84h1M149 84h2M226 84h26M328 84h1M350 84h1M405 84h1M72 85h1M127 85h1M147 85h2M221 85h5M252 85h6M329 85h2M351 85h1M406 85h1M71 86h1M126 86h1M145 86h2M210 86h11M258 86h11M331 86h2M352 86h1M407 86h1M70 87h1M124 87h2M144 87h1M206 87h4M269 87h4M333 87h2M353 87h2M408 87h1M69 88h1M123 88h1M143 88h1M204 88h2M273 88h2M335 88h1M355 88h1M409 88h1M68 89h1M122 89h1M141 89h2M200 89h4M275 89h4M336 89h2M356 89h1M410 89h1M67 90h1M120 90h2M140 90h1M196 90h4M279 90h4M338 90h1M357 90h2M411 90h1M67 91h1M119 91h1M139 91h1M193 91h3M283 91h3M339 91h1M359 91h1M411 91h1M66 92h1M117 92h2M137 92h2M189 92h4M286 92h4M340 92h2M360 92h2M412 92h1M65 93h1M116 93h1M135 93h2M185 93h4M290 93h4M342 93h2M362 93h1M413 93h1M64 94h1M115 94h1M134 94h1M183 94h2M294 94h2M344 94h1M363 94h1M414 94h1M63 95h1M113 95h2M133 95h1M180 95h3M296 95h3M345 95h1M364 95h2M415 95h1M62 96h1M112 96h1M131 96h2M178 96h2M299 96h2M346 96h2M366 96h1M416 96h1M62 97h1M111 97h1M130 97h1M176 97h2M301 97h2M348 97h1M367 97h1M416 97h1M61 98h1M110 98h1M129 98h1M174 98h2M303 98h2M349 98h1M368 98h1M417 98h1M60 99h1M109 99h1M128 99h1M172 99h2M305 99h2M350 99h1M369 99h1M418 99h1M59 100h1M108 100h1M126 100h2M170 100h2M307 100h2M351 100h2M370 100h1M419 100h1M59 101h1M107 101h1M125 101h1M168 101h2M309 101h2M353 101h1M371 101h1M419 101h1M58 102h1M106 102h1M124 102h1M166 102h2M311 102h2M354 102h1M372 102h1M420 102h1M57 103h1M105 103h1M123 103h1M164 103h2M313 103h1M355 103h1M373 103h1M421 103h1M56 104h1M104 104h1M121 104h2M163 104h1M314 104h2M356 104h2M374 104h1M422 104h1M56 105h1M103 105h1M120 105h1M162 105h1M316 105h1M358 105h1M375 105h1M422 105h1M55 106h1M102 106h1M119 106h1M160 106h2M317 106h2M359 106h1M376 106h1M423 106h1M54 107h1M101 107h1M118 107h1M158 107h2M319 107h2M360 107h1M377 107h1M424 107h1M54 108h1M100 108h1M117 108h1M157 108h1M321 108h1M361 108h1M378 108h1M424 108h1M53 109h1M99 109h1M116 109h1M155 109h2M322 109h1M362 109h1M379 109h1M425 109h1M52 110h1M98 110h1M115 110h1M154 110h1M323 110h2M363 110h1M380 110h1M426 110h1M52 111h1M97 111h1M114 111h1M153 111h1M325 111h1M364 111h1M381 111h1M426 111h1M51 112h1M96 112h1M113 112h1M151 112h2M326 112h2M365 112h1M382 112h1M427 112h1M50 113h1M95 113h1M112 113h1M149 113h2M328 113h2M366 113h1M383 113h1M428 113h1M50 114h1M95 114h1M111 114h1M148 114h1M330 114h1M367 114h1M383 114h1M428 114h1M49 115h1M94 115h1M110 115h1M146 115h2M331 115h1M368 115h1M384 115h1M429 115h1M49 116h1M93 116h1M109 116h1M145 116h1M332 116h2M369 116h1M385 116h1M429 116h1M48 117h1M92 117h1M108 117h1M144 117h1M334 117h1M370 117h1M386 117h1M430 117h1M48 118h1M92 118h1M107 118h1M142 118h2M335 118h1M371 118h1M386 118h1M430 118h1M47 119h1M91 119h1M106 119h1M141 119h1M336 119h2M372 119h1M387 119h1M431 119h1M46 120h1M90 120h1M105 120h1M140 120h1M338 120h1M373 120h1M388 120h1M432 120h1M46 121h1M90 121h1M104 121h1M139 121h1M339 121h1M374 121h1M388 121h1M432 121h1M45 122h1M89 122h1M104 122h1M137 122h2M340 122h2M374 122h1M389 122h1M433 122h1M44 123h1M88 123h1M103 123h1M136 123h1M342 123h1M375 123h1M390 123h1M434 123h1M43 124h1M87 124h1M102 124h1M135 124h1M343 124h1M376 124h1M391 124h1M435 124h1M43 125h1M87 125h1M101 125h1M134 125h1M344 125h1M377 125h1M391 125h1M435 125h1M42 126h1M86 126h1M100 126h1M133 126h1M345 126h1M378 126h1M392 126h1M436 126h1M42 127h1M85 127h1M100 127h1M132 127h1M346 127h1M378 127h1M393 127h1M436 127h1M41 128h1M84 128h1M99 128h1M131 128h1M347 128h1M379 128h1M394 128h1M437 128h1M41 129h1M83 129h1M98 129h1M130 129h1M348 129h1M380 129h1M395 129h1M437 129h1M40 130h1M83 130h1M97 130h1M129 130h1M349 130h1M381 130h1M395 130h1M438 130h1M40 131h1M82 131h1M96 131h1M128 131h1M350 131h1M382 131h1M396 131h1M438 131h1M39 132h1M81 132h1M96 132h1M127 132h1M351 132h1M382 132h1M397 132h1M439 132h1M39 133h1M80 133h1M95 133h1M126 133h1M352 133h1M383 133h1M398 133h1M439 133h1M38 134h1M80 134h1M94 134h1M125 134h1M353 134h1M384 134h1M398 134h1M440 134h1M38 135h1M79 135h1M93 135h1M124 135h1M354 135h1M385 135h1M399 135h1M440 135h1M37 136h1M78 136h1M93 136h1M123 136h1M355 136h1M385 136h1M400 136h1M441 136h1M37 137h1M78 137h1M92 137h1M122 137h1M356 137h1M386 137h1M400 137h1M441 137h1M36 138h1M77 138h1M92 138h1M122 138h1M356 138h1M386 138h1M401 138h1M442 138h1M36 139h1M76 139h1M91 139h1M121 139h1M357 139h1M387 139h1M402 139h1M442 139h1M35 140h1M76 140h1M90 140h1M120 140h1M358 140h1M388 140h1M402 140h1M443 140h1M35 141h1M75 141h1M89 141h1M119 141h1M359 141h1M389 141h1M403 141h1M443 141h1M34 142h1M75 142h1M89 142h1M118 142h1M360 142h1M389 142h1M403 142h1M444 142h1M34 143h1M74 143h1M88 143h1M118 143h1M360 143h1M390 143h1M404 143h1M444 143h1M33 144h1M74 144h1M87 144h1M117 144h1M361 144h1M391 144h1M404 144h1M445 144h1M33 145h1M73 145h1M86 145h1M116 145h1M362 145h1M392 145h1M405 145h1M445 145h1M32 146h1M73 146h1M86 146h1M115 146h1M363 146h1M392 146h1M405 146h1M446 146h1M32 147h1M72 147h1M85 147h1M115 147h1M363 147h1M393 147h1M406 147h1M446 147h1M32 148h1M71 148h1M85 148h1M114 148h1M364 148h1M393 148h1M407 148h1M446 148h1M31 149h1M71 149h1M84 149h1M113 149h1M365 149h1M394 149h1M407 149h1M447 149h1M31 150h1M70 150h1M84 150h1M113 150h1M365 150h1M394 150h1M408 150h1M447 150h1M30 151h1M69 151h1M83 151h1M112 151h1M366 151h1M395 151h1M409 151h1M448 151h1M30 152h1M69 152h1M83 152h1M112 152h1M366 152h1M395 152h1M409 152h1M448 152h1M29 153h1M68 153h1M82 153h1M111 153h1M367 153h1M396 153h1M410 153h1M449 153h1M29 154h1M68 154h1M82 154h1M110 154h1M368 154h1M396 154h1M410 154h1M449 154h1M29 155h1M67 155h1M81 155h1M109 155h1M369 155h1M397 155h1M411 155h1M449 155h1M28 156h1M67 156h1M80 156h1M109 156h1M369 156h1M398 156h1M411 156h1M450 156h1M28 157h1M67 157h1M80 157h1M108 157h1M370 157h1M398 157h1M411 157h1M450 157h1M27 158h1M66 158h1M79 158h1M107 158h1M371 158h1M399 158h1M412 158h1M451 158h1M27 159h1M66 159h1M79 159h1M107 159h1M371 159h1M399 159h1M412 159h1M451 159h1M27 160h1M66 160h1M78 160h1M106 160h1M372 160h1M400 160h1M412 160h1M451 160h1M26 161h1M65 161h1M78 161h1M106 161h1M372 161h1M400 161h1M413 161h1M452 161h1M26 162h1M65 162h1M78 162h1M105 162h1M373 162h1M400 162h1M413 162h1M452 162h1M26 163h1M64 163h1M77 163h1M104 163h1M374 163h1M401 163h1M414 163h1M452 163h1M25 164h1M64 164h1M77 164h1M103 164h1M375 164h1M401 164h1M414 164h1M453 164h1M25 165h1M63 165h1M76 165h1M103 165h1M375 165h1M402 165h1M415 165h1M453 165h1M24 166h1M63 166h1M76 166h1M102 166h1M376 166h1M402 166h1M415 166h1M454 166h1M24 167h1M62 167h1M75 167h1M102 167h1M376 167h1M403 167h1M416 167h1M454 167h1M23 168h1M62 168h1M75 168h1M101 168h1M377 168h1M403 168h1M416 168h1M455 168h1M23 169h1M62 169h1M74 169h1M101 169h1M377 169h1M404 169h1M416 169h1M455 169h1M23 170h1M61 170h1M74 170h1M100 170h1M378 170h1M404 170h1M417 170h1M455 170h1M22 171h1M61 171h1M73 171h1M100 171h1M378 171h1M405 171h1M417 171h1M456 171h1M22 172h1M61 172h1M73 172h1M99 172h1M379 172h1M405 172h1M417 172h1M456 172h1M22 173h1M60 173h1M73 173h1M99 173h1M379 173h1M405 173h1M418 173h1M456 173h1M22 174h1M60 174h1M72 174h1M98 174h1M380 174h1M406 174h1M418 174h1M456 174h1M21 175h1M59 175h1M72 175h1M98 175h1M380 175h1M406 175h1M419 175h1M457 175h1M21 176h1M59 176h1M72 176h1M97 176h1M381 176h1M406 176h1M419 176h1M457 176h1M21 177h1M58 177h1M71 177h1M97 177h1M381 177h1M407 177h1M420 177h1M457 177h1M21 178h1M58 178h1M71 178h1M96 178h1M382 178h1M407 178h1M420 178h1M457 178h1M20 179h1M57 179h1M71 179h1M96 179h1M382 179h1M407 179h1M421 179h1M458 179h1M20 180h1M57 180h1M70 180h1M95 180h1M383 180h1M408 180h1M421 180h1M458 180h1M20 181h1M57 181h1M70 181h1M95 181h1M383 181h1M408 181h1M421 181h1M458 181h1M20 182h1M56 182h1M70 182h1M95 182h1M383 182h1M408 182h1M422 182h1M458 182h1M19 183h1M56 183h1M69 183h1M94 183h1M384 183h1M409 183h1M422 183h1M459 183h1M19 184h1M56 184h1M69 184h1M94 184h1M384 184h1M409 184h1M422 184h1M459 184h1M19 185h1M56 185h1M69 185h1M93 185h1M385 185h1M409 185h1M422 185h1M459 185h1M18 186h1M55 186h1M68 186h1M93 186h1M385 186h1M410 186h1M423 186h1M460 186h1M18 187h1M55 187h1M68 187h1M93 187h1M385 187h1M410 187h1M423 187h1M460 187h1M18 188h1M55 188h1M68 188h1M93 188h1M385 188h1M410 188h1M423 188h1M460 188h1M18 189h1M55 189h1M67 189h1M92 189h1M386 189h1M411 189h1M423 189h1M460 189h1M17 190h1M54 190h1M67 190h1M92 190h1M386 190h1M411 190h1M424 190h1M461 190h1M17 191h1M54 191h1M67 191h1M92 191h1M386 191h1M411 191h1M424 191h1M461 191h1M17 192h1M54 192h1M66 192h1M92 192h1M386 192h1M412 192h1M424 192h1M461 192h1M17 193h1M54 193h1M66 193h1M91 193h1M387 193h1M412 193h1M424 193h1M461 193h1M16 194h1M54 194h1M66 194h1M91 194h1M387 194h1M412 194h1M424 194h1M462 194h1M16 195h1M53 195h1M65 195h1M91 195h1M387 195h1M413 195h1M425 195h1M462 195h1M16 196h1M53 196h1M65 196h1M90 196h1M388 196h1M413 196h1M425 196h1M462 196h1M16 197h1M53 197h1M65 197h1M90 197h1M388 197h1M413 197h1M425 197h1M462 197h1M15 198h1M53 198h1M65 198h1M90 198h1M388 198h1M413 198h1M425 198h1M463 198h1M15 199h1M52 199h1M64 199h1M90 199h1M388 199h1M414 199h1M426 199h1M463 199h1M15 200h1M52 200h1M64 200h1M89 200h1M389 200h1M414 200h1M426 200h1M463 200h1M15 201h1M52 201h1M64 201h1M89 201h1M389 201h1M414 201h1M426 201h1M463 201h1M15 202h1M52 202h1M64 202h1M89 202h1M389 202h1M414 202h1M426 202h1M463 202h1M15 203h1M51 203h1M64 203h1M89 203h1M389 203h1M414 203h1M427 203h1M463 203h1M14 204h1M51 204h1M64 204h1M88 204h1M390 204h1M414 204h1M427 204h1M464 204h1M14 205h1M51 205h1M63 205h1M88 205h1M390 205h1M415 205h1M427 205h1M464 205h1M14 206h1M51 206h1M63 206h1M87 206h1M391 206h1M415 206h1M427 206h1M464 206h1M14 207h1M51 207h1M63 207h1M87 207h1M391 207h1M415 207h1M427 207h1M464 207h1M14 208h1M51 208h1M63 208h1M87 208h1M391 208h1M415 208h1M427 208h1M464 208h1M14 209h1M51 209h1M63 209h1M87 209h1M391 209h1M415 209h1M427 209h1M464 209h1M14 210h1M50 210h1M63 210h1M86 210h1M392 210h1M415 210h1M428 210h1M464 210h1M14 211h1M50 211h1M63 211h1M86 211h1M392 211h1M415 211h1M428 211h1M464 211h1M13 212h1M50 212h1M62 212h1M86 212h1M392 212h1M416 212h1M428 212h1M465 212h1M13 213h1M50 213h1M62 213h1M86 213h1M392 213h1M416 213h1M428 213h1M465 213h1M13 214h1M50 214h1M62 214h1M86 214h1M392 214h1M416 214h1M428 214h1M465 214h1M13 215h1M50 215h1M62 215h1M86 215h1M392 215h1M416 215h1M428 215h1M465 215h1M13 216h1M49 216h1M62 216h1M86 216h1M392 216h1M416 216h1M429 216h1M465 216h1M13 217h1M49 217h1M62 217h1M86 217h1M392 217h1M416 217h1M429 217h1M465 217h1M13 218h1M49 218h1M61 218h1M86 218h1M392 218h1M417 218h1M429 218h1M465 218h1M13 219h1M49 219h1M61 219h1M86 219h1M392 219h1M417 219h1M429 219h1M465 219h1M13 220h1M49 220h1M61 220h1M86 220h1M392 220h1M417 220h1M429 220h1M465 220h1M13 221h1M49 221h1M61 221h1M85 221h1M393 221h1M417 221h1M429 221h1M465 221h1M13 222h1M49 222h1M61 222h1M85 222h1M393 222h1M417 222h1M429 222h1M465 222h1M13 223h1M48 223h1M61 223h1M85 223h1M393 223h1M417 223h1M430 223h1M465 223h1M13 224h1M48 224h1M60 224h1M85 224h1M393 224h1M418 224h1M430 224h1M465 224h1M13 225h1M48 225h1M60 225h1M85 225h1M393 225h1M418 225h1M430 225h1M465 225h1M13 226h1M48 226h1M60 226h1M84 226h1M394 226h1M418 226h1M430 226h1M465 226h1M13 227h1M48 227h1M60 227h1M84 227h1M394 227h1M418 227h1M430 227h1M465 227h1M12 228h1M48 228h1M60 228h1M84 228h1M394 228h1M418 228h1M430 228h1M466 228h1M12 229h1M48 229h1M60 229h1M84 229h1M394 229h1M418 229h1M430 229h1M466 229h1M12 230h1M48 230h1M60 230h1M84 230h1M394 230h1M418 230h1M430 230h1M466 230h1M12 231h1M48 231h1M60 231h1M84 231h1M394 231h1M418 231h1M430 231h1M466 231h1M12 232h1M48 232h1M60 232h1M84 232h1M394 232h1M418 232h1M430 232h1M466 232h1M12 233h1M48 233h1M60 233h1M84 233h1M394 233h1M418 233h1M430 233h1M466 233h1M12 234h1M48 234h1M60 234h1M84 234h1M394 234h1M418 234h1M430 234h1M466 234h1M12 235h1M48 235h1M60 235h1M84 235h1M394 235h1M418 235h1M430 235h1M466 235h1M12 236h1M48 236h1M60 236h1M84 236h1M394 236h1M418 236h1M430 236h1M466 236h1M12 237h1M48 237h1M60 237h1M84 237h1M394 237h1M418 237h1M430 237h1M466 237h1M12 238h1M48 238h1M60 238h1M84 238h1M394 238h1M418 238h1M430 238h1M466 238h1M12 239h1M48 239h1M84 239h1M394 239h1M430 239h1M466 239h1M12 240h1M48 240h1M60 240h1M84 240h1M394 240h1M418 240h1M430 240h1M466 240h1M12 241h1M48 241h1M60 241h1M84 241h1M394 241h1M418 241h1M430 241h1M466 241h1M12 242h1M48 242h1M60 242h1M84 242h1M394 242h1M418 242h1M430 242h1M466 242h1M12 243h1M48 243h1M60 243h1M84 243h1M394 243h1M418 243h1M430 243h1M466 243h1M12 244h1M48 244h1M60 244h1M84 244h1M394 244h1M418 244h1M430 244h1M466 244h1M12 245h1M48 245h1M60 245h1M84 245h1M394 245h1M418 245h1M430 245h1M466 245h1M12 246h1M48 246h1M60 246h1M84 246h1M394 246h1M418 246h1M430 246h1M466 246h1M12 247h1M48 247h1M60 247h1M84 247h1M394 247h1M418 247h1M430 247h1M466 247h1M12 248h1M48 248h1M60 248h1M84 248h1M394 248h1M418 248h1M430 248h1M466 248h1M12 249h1M48 249h1M60 249h1M84 249h1M394 249h1M418 249h1M430 249h1M466 249h1M13 250h1M48 250h1M60 250h1M84 250h1M394 250h1M418 250h1M430 250h1M465 250h1M13 251h1M48 251h1M60 251h1M84 251h1M394 251h1M418 251h1M430 251h1M465 251h1M13 252h1M48 252h1M60 252h1M85 252h1M393 252h1M418 252h1M430 252h1M465 252h1M13 253h1M48 253h1M60 253h1M85 253h1M393 253h1M418 253h1M430 253h1M465 253h1M13 254h1M48 254h1M61 254h1M85 254h1M393 254h1M417 254h1M430 254h1M465 254h1M13 255h1M48 255h1M61 255h1M85 255h1M393 255h1M417 255h1M430 255h1M465 255h1M13 256h1M49 256h1M61 256h1M85 256h1M393 256h1M417 256h1M429 256h1M465 256h1M13 257h1M49 257h1M61 257h1M85 257h1M393 257h1M417 257h1M429 257h1M465 257h1M13 258h1M49 258h1M61 258h1M86 258h1M392 258h1M417 258h1M429 258h1M465 258h1M13 259h1M49 259h1M61 259h1M86 259h1M392 259h1M417 259h1M429 259h1M465 259h1M13 260h1M49 260h1M62 260h1M86 260h1M392 260h1M416 260h1M429 260h1M465 260h1M13 261h1M49 261h1M62 261h1M86 261h1M392 261h1M416 261h1M429 261h1M465 261h1M13 262h1M50 262h1M62 262h1M86 262h1M392 262h1M416 262h1M428 262h1M465 262h1M13 263h1M50 263h1M62 263h1M86 263h1M392 263h1M416 263h1M428 263h1M465 263h1M13 264h1M50 264h1M62 264h1M86 264h1M392 264h1M416 264h1M428 264h1M465 264h1M13 265h1M50 265h1M62 265h1M86 265h1M392 265h1M416 265h1M428 265h1M465 265h1M14 266h1M50 266h1M62 266h1M86 266h1M392 266h1M416 266h1M428 266h1M464 266h1M14 267h1M50 267h1M63 267h1M86 267h1M392 267h1M415 267h1M428 267h1M464 267h1M14 268h1M50 268h1M63 268h1M86 268h1M392 268h1M415 268h1M428 268h1M464 268h1M14 269h1M51 269h1M63 269h1M87 269h1M391 269h1M415 269h1M427 269h1M464 269h1M14 270h1M51 270h1M63 270h1M87 270h1M391 270h1M415 270h1M427 270h1M464 270h1M14 271h1M51 271h1M63 271h1M87 271h1M391 271h1M415 271h1M427 271h1M464 271h1M14 272h1M51 272h1M63 272h1M87 272h1M391 272h1M415 272h1M427 272h1M464 272h1M14 273h1M51 273h1M64 273h1M88 273h1M390 273h1M414 273h1M427 273h1M464 273h1M15 274h1M51 274h1M64 274h1M88 274h1M390 274h1M414 274h1M427 274h1M463 274h1M15 275h1M52 275h1M64 275h1M89 275h1M389 275h1M414 275h1M426 275h1M463 275h1M15 276h1M52 276h1M64 276h1M89 276h1M389 276h1M414 276h1M426 276h1M463 276h1M15 277h1M52 277h1M64 277h1M89 277h1M389 277h1M414 277h1M426 277h1M463 277h1M15 278h1M52 278h1M64 278h1M89 278h1M389 278h1M414 278h1M426 278h1M463 278h1M15 279h1M52 279h1M65 279h1M90 279h1M388 279h1M413 279h1M426 279h1M463 279h1M16 280h1M53 280h1M65 280h1M90 280h1M388 280h1M413 280h1M425 280h1M462 280h1M16 281h1M53 281h1M65 281h1M90 281h1M388 281h1M413 281h1M425 281h1M462 281h1M16 282h1M53 282h1M65 282h1M90 282h1M388 282h1M413 282h1M425 282h1M462 282h1M16 283h1M53 283h1M65 283h1M91 283h1M387 283h1M413 283h1M425 283h1M462 283h1M17 284h1M54 284h1M66 284h1M91 284h1M387 284h1M412 284h1M424 284h1M461 284h1M17 285h1M54 285h1M66 285h1M91 285h1M387 285h1M412 285h1M424 285h1M461 285h1M17 286h1M54 286h1M66 286h1M92 286h1M386 286h1M412 286h1M424 286h1M461 286h1M17 287h1M54 287h1M67 287h1M92 287h1M386 287h1M411 287h1M424 287h1M461 287h1M18 288h1M55 288h1M67 288h1M92 288h1M386 288h1M411 288h1M423 288h1M460 288h1M18 289h1M55 289h1M67 289h1M92 289h1M386 289h1M411 289h1M423 289h1M460 289h1M18 290h1M55 290h1M68 290h1M93 290h1M385 290h1M410 290h1M423 290h1M460 290h1M18 291h1M55 291h1M68 291h1M93 291h1M385 291h1M410 291h1M423 291h1M460 291h1M19 292h1M55 292h1M68 292h1M93 292h1M385 292h1M410 292h1M423 292h1M459 292h1M19 293h1M56 293h1M69 293h1M93 293h1M385 293h1M409 293h1M422 293h1M459 293h1M19 294h1M56 294h1M69 294h1M94 294h1M384 294h1M409 294h1M422 294h1M459 294h1M19 295h1M56 295h1M69 295h1M94 295h1M384 295h1M409 295h1M422 295h1M459 295h1M20 296h1M56 296h1M70 296h1M95 296h1M383 296h1M408 296h1M422 296h1M458 296h1M20 297h1M57 297h1M70 297h1M95 297h1M383 297h1M408 297h1M421 297h1M458 297h1M20 298h1M57 298h1M70 298h1M95 298h1M383 298h1M408 298h1M421 298h1M458 298h1M20 299h1M58 299h1M71 299h1M96 299h1M382 299h1M407 299h1M420 299h1M458 299h1M21 300h1M58 300h1M71 300h1M96 300h1M382 300h1M407 300h1M420 300h1M457 300h1M21 301h1M59 301h1M71 301h1M97 301h1M381 301h1M407 301h1M419 301h1M457 301h1M21 302h1M59 302h1M72 302h1M97 302h1M381 302h1M406 302h1M419 302h1M457 302h1M22 303h1M60 303h1M72 303h1M98 303h1M380 303h1M406 303h1M418 303h1M456 303h1M22 304h1M60 304h1M72 304h1M98 304h1M380 304h1M406 304h1M418 304h1M456 304h1M22 305h1M60 305h1M73 305h1M99 305h1M379 305h1M405 305h1M418 305h1M456 305h1M22 306h1M61 306h1M73 306h1M99 306h1M379 306h1M405 306h1M417 306h1M456 306h1M23 307h1M61 307h1M74 307h1M100 307h1M378 307h1M404 307h1M417 307h1M455 307h1M23 308h1M61 308h1M74 308h1M100 308h1M378 308h1M404 308h1M417 308h1M455 308h1M23 309h1M62 309h1M75 309h1M101 309h1M377 309h1M403 309h1M416 309h1M455 309h1M23 310h1M62 310h1M75 310h1M101 310h1M377 310h1M403 310h1M416 310h1M455 310h1M24 311h1M63 311h1M76 311h1M102 311h1M376 311h1M402 311h1M415 311h1M454 311h1M24 312h1M63 312h1M76 312h1M102 312h1M376 312h1M402 312h1M415 312h1M454 312h1M25 313h1M64 313h1M76 313h1M103 313h1M375 313h1M402 313h1M414 313h1M453 313h1M25 314h1M64 314h1M77 314h1M104 314h1M374 314h1M401 314h1M414 314h1M453 314h1M26 315h1M65 315h1M77 315h1M104 315h1M374 315h1M401 315h1M413 315h1M452 315h1M26 316h1M65 316h1M78 316h1M105 316h1M373 316h1M400 316h1M413 316h1M452 316h1M26 317h1M65 317h1M78 317h1M106 317h1M372 317h1M400 317h1M413 317h1M452 317h1M27 318h1M66 318h1M79 318h1M106 318h1M372 318h1M399 318h1M412 318h1M451 318h1M27 319h1M66 319h1M79 319h1M107 319h1M371 319h1M399 319h1M412 319h1M451 319h1M28 320h1M66 320h1M80 320h1M107 320h1M371 320h1M398 320h1M412 320h1M450 320h1M28 321h1M67 321h1M80 321h1M108 321h1M370 321h1M398 321h1M411 321h1M450 321h1M28 322h1M67 322h1M109 322h1M369 322h1M397 322h1M411 322h1M450 322h1M29 323h1M68 323h1M81 323h1M110 323h1M368 323h1M397 323h1M410 323h1M449 323h1M29 324h1M68 324h1M82 324h1M110 324h1M368 324h1M396 324h1M410 324h1M449 324h1M29 325h1M69 325h1M82 325h1M111 325h1M367 325h1M396 325h1M409 325h1M449 325h1M30 326h1M69 326h1M83 326h1M112 326h1M366 326h1M395 326h1M409 326h1M448 326h1M30 327h1M70 327h1M83 327h1M112 327h1M366 327h1M395 327h1M408 327h1M448 327h1M31 328h1M70 328h1M84 328h1M113 328h1M365 328h1M394 328h1M408 328h1M447 328h1M31 329h1M71 329h1M85 329h1M113 329h1M365 329h1M393 329h1M407 329h1M447 329h1M32 330h1M71 330h1M85 330h1M114 330h1M364 330h1M393 330h1M407 330h1M446 330h1M32 331h1M72 331h1M86 331h1M115 331h1M363 331h1M392 331h1M406 331h1M446 331h1M32 332h1M73 332h1M86 332h1M116 332h1M362 332h1M392 332h1M405 332h1M446 332h1M33 333h1M73 333h1M87 333h1M116 333h1M362 333h1M391 333h1M405 333h1M445 333h1M33 334h1M74 334h1M87 334h1M117 334h1M361 334h1M391 334h1M404 334h1M445 334h1M34 335h1M75 335h1M88 335h1M118 335h1M360 335h1M390 335h1M403 335h1M444 335h1M34 336h1M75 336h1M89 336h1M119 336h1M359 336h1M389 336h1M403 336h1M444 336h1M35 337h1M76 337h1M89 337h1M119 337h1M359 337h1M389 337h1M402 337h1M443 337h1M35 338h1M76 338h1M90 338h1M120 338h1M358 338h1M388 338h1M402 338h1M443 338h1M36 339h1M77 339h1M91 339h1M121 339h1M357 339h1M387 339h1M401 339h1M442 339h1M36 340h1M77 340h1M92 340h1M122 340h1M356 340h1M386 340h1M401 340h1M442 340h1M37 341h1M78 341h1M92 341h1M122 341h1M356 341h1M386 341h1M400 341h1M441 341h1M37 342h1M78 342h1M93 342h1M123 342h1M355 342h1M385 342h1M400 342h1M441 342h1M38 343h1M79 343h1M93 343h1M124 343h1M354 343h1M385 343h1M399 343h1M440 343h1M38 344h1M80 344h1M94 344h1M125 344h1M353 344h1M384 344h1M398 344h1M440 344h1M39 345h1M80 345h1M95 345h1M126 345h1M352 345h1M383 345h1M398 345h1M439 345h1M39 346h1M81 346h1M96 346h1M127 346h1M351 346h1M382 346h1M397 346h1M439 346h1M40 347h1M82 347h1M96 347h1M128 347h1M350 347h1M382 347h1M396 347h1M438 347h1M40 348h1M83 348h1M97 348h1M129 348h1M349 348h1M381 348h1M395 348h1M438 348h1M41 349h1M83 349h1M98 349h1M130 349h1M348 349h1M380 349h1M395 349h1M437 349h1M41 350h1M84 350h1M99 350h1M131 350h1M347 350h1M379 350h1M394 350h1M437 350h1M42 351h1M85 351h1M100 351h1M132 351h1M346 351h1M378 351h1M393 351h1M436 351h1M42 352h1M86 352h1M100 352h1M133 352h1M345 352h1M378 352h1M392 352h1M436 352h1M43 353h1M87 353h1M101 353h1M134 353h1M344 353h1M377 353h1M391 353h1M435 353h1M43 354h1M87 354h1M102 354h1M135 354h1M343 354h1M376 354h1M391 354h1M435 354h1M44 355h1M88 355h1M103 355h1M136 355h1M342 355h1M375 355h1M390 355h1M434 355h1M45 356h1M89 356h1M104 356h1M137 356h2M340 356h2M374 356h1M389 356h1M433 356h1M46 357h1M90 357h1M104 357h1M139 357h1M339 357h1M374 357h1M388 357h1M432 357h1M46 358h1M90 358h1M105 358h1M140 358h1M338 358h1M373 358h1M388 358h1M432 358h1M47 359h1M91 359h1M106 359h1M141 359h1M336 359h2M372 359h1M387 359h1M431 359h1M48 360h1M92 360h1M107 360h1M142 360h2M335 360h1M371 360h1M386 360h1M430 360h1M48 361h1M92 361h1M108 361h1M144 361h1M334 361h1M370 361h1M386 361h1M430 361h1M49 362h1M93 362h1M109 362h1M145 362h1M332 362h2M369 362h1M385 362h1M429 362h1M49 363h1M94 363h1M110 363h1M146 363h2M331 363h1M368 363h1M384 363h1M429 363h1M50 364h1M95 364h1M111 364h1M148 364h1M330 364h1M367 364h1M383 364h1M428 364h1M50 365h1M95 365h1M112 365h1M149 365h2M328 365h2M366 365h1M383 365h1M428 365h1M51 366h1M96 366h1M113 366h1M151 366h2M326 366h2M365 366h1M382 366h1M427 366h1M52 367h1M97 367h1M114 367h1M153 367h1M325 367h1M364 367h1M381 367h1M426 367h1M52 368h1M98 368h1M115 368h1M154 368h1M323 368h2M363 368h1M380 368h1M426 368h1M53 369h1M99 369h1M116 369h1M155 369h2M322 369h1M362 369h1M379 369h1M425 369h1M54 370h1M100 370h1M117 370h1M157 370h1M321 370h1M361 370h1M378 370h1M424 370h1M54 371h1M101 371h1M118 371h1M158 371h2M319 371h2M360 371h1M377 371h1M424 371h1M55 372h1M102 372h1M119 372h1M160 372h2M317 372h2M359 372h1M376 372h1M423 372h1M56 373h1M103 373h1M120 373h1M162 373h1M316 373h1M358 373h1M375 373h1M422 373h1M56 374h1M104 374h1M121 374h2M163 374h1M314 374h2M356 374h2M374 374h1M422 374h1M57 375h1M105 375h1M123 375h1M164 375h2M313 375h1M355 375h1M373 375h1M421 375h1M58 376h1M106 376h1M124 376h1M166 376h2M311 376h2M354 376h1M372 376h1M420 376h1M59 377h1M107 377h1M125 377h1M168 377h2M309 377h2M353 377h1M371 377h1M419 377h1M59 378h1M108 378h1M126 378h2M170 378h2M307 378h2M351 378h2M370 378h1M419 378h1M60 379h1M109 379h1M128 379h1M172 379h2M305 379h2M350 379h1M369 379h1M418 379h1M61 380h1M110 380h1M129 380h1M174 380h2M303 380h2M349 380h1M368 380h1M417 380h1M62 381h1M111 381h1M130 381h1M176 381h2M301 381h2M348 381h1M367 381h1M416 381h1M63 382h1M112 382h1M131 382h2M178 382h2M299 382h2M346 382h2M366 382h1M415 382h1M63 383h1M113 383h2M133 383h1M180 383h3M296 383h3M345 383h1M364 383h2M415 383h1M64 384h1M115 384h1M134 384h1M183 384h2M294 384h2M344 384h1M363 384h1M414 384h1M65 385h1M116 385h1M135 385h2M185 385h4M290 385h4M342 385h2M362 385h1M413 385h1M66 386h1M117 386h2M137 386h2M189 386h4M286 386h4M340 386h2M360 386h2M412 386h1M67 387h1M119 387h1M139 387h1M193 387h3M283 387h3M339 387h1M359 387h1M411 387h1M68 388h1M120 388h2M140 388h1M196 388h4M279 388h4M338 388h1M357 388h2M410 388h1M68 389h1M122 389h1M141 389h2M200 389h4M275 389h4M336 389h2M356 389h1M410 389h1M69 390h1M123 390h1M143 390h1M204 390h2M273 390h2M335 390h1M355 390h1M409 390h1M70 391h1M124 391h2M144 391h1M206 391h4M269 391h4M333 391h2M353 391h2M408 391h1M71 392h1M126 392h1M145 392h2M210 392h11M258 392h11M331 392h2M352 392h1M407 392h1M72 393h1M127 393h1M147 393h2M221 393h5M252 393h6M329 393h2M351 393h1M406 393h1M73 394h1M128 394h1M149 394h2M226 394h26M328 394h1M350 394h1M405 394h1M74 395h1M129 395h2M151 395h2M326 395h2M348 395h2M404 395h1M75 396h1M131 396h1M153 396h2M324 396h2M347 396h1M403 396h1M76 397h1M132 397h1M155 397h1M322 397h2M346 397h1M402 397h1M77 398h1M133 398h2M156 398h2M320 398h2M344 398h2M401 398h1M78 399h1M135 399h1M158 399h2M318 399h2M343 399h1M400 399h1M79 400h1M136 400h2M160 400h3M316 400h2M341 400h2M399 400h1M80 401h1M138 401h1M163 401h2M314 401h2M339 401h2M398 401h1M81 402h1M139 402h2M165 402h2M311 402h3M337 402h2M397 402h1M82 403h1M141 403h2M167 403h2M309 403h2M335 403h2M396 403h1M83 404h1M143 404h2M169 404h2M307 404h2M334 404h1M395 404h1M84 405h1M145 405h2M171 405h3M305 405h2M332 405h2M394 405h1M85 406h1M147 406h1M174 406h3M302 406h3M331 406h1M393 406h1M86 407h1M148 407h2M177 407h3M299 407h3M329 407h2M392 407h1M87 408h1M150 408h1M180 408h3M296 408h3M327 408h2M391 408h1M88 409h1M151 409h2M183 409h3M293 409h3M325 409h2M390 409h1M89 410h1M153 410h2M186 410h3M290 410h3M323 410h2M388 410h2M90 411h2M155 411h3M189 411h3M287 411h3M321 411h2M387 411h1M92 412h1M158 412h3M192 412h3M284 412h3M318 412h3M386 412h1M93 413h1M161 413h2M195 413h4M279 413h5M315 413h3M385 413h1M94 414h1M163 414h2M199 414h6M273 414h6M313 414h2M384 414h1M95 415h1M165 415h2M205 415h7M267 415h6M311 415h2M382 415h2M96 416h2M167 416h3M212 416h6M260 416h7M309 416h2M381 416h1M98 417h1M170 417h3M218 417h6M254 417h6M306 417h3M380 417h1M99 418h1M173 418h2M224 418h30M303 418h3M379 418h1M100 419h2M175 419h2M301 419h2M377 419h2M102 420h1M177 420h2M299 420h2M376 420h1M103 421h1M179 421h3M297 421h2M375 421h1M104 422h2M182 422h4M293 422h4M373 422h2M106 423h1M186 423h4M288 423h5M372 423h1M107 424h2M190 424h5M284 424h4M370 424h2M109 425h1M195 425h4M280 425h4M369 425h1M110 426h2M199 426h4M275 426h5M367 426h2M112 427h1M203 427h7M269 427h6M366 427h1M113 428h2M210 428h6M262 428h7M364 428h2M115 429h2M216 429h7M256 429h6M362 429h2M117 430h2M223 430h33M360 430h2M119 431h1M359 431h1M120 432h2M357 432h2M122 433h1M356 433h1M123 434h1M355 434h1M124 435h2M353 435h2M126 436h2M351 436h2M128 437h2M349 437h2M130 438h2M347 438h2M132 439h2M345 439h2M134 440h2M343 440h2M136 441h2M341 441h2M138 442h2M339 442h2M140 443h2M337 443h2M142 444h2M335 444h2M144 445h2M333 445h2M146 446h3M330 446h3M149 447h2M328 447h2M151 448h2M326 448h2M153 449h3M323 449h3M156 450h2M320 450h3M158 451h3M318 451h2M161 452h3M315 452h3M164 453h2M313 453h2M166 454h2M311 454h2M168 455h3M307 455h4M171 456h4M303 456h4M175 457h4M300 457h3M179 458h4M296 458h4M183 459h3M292 459h4M186 460h4M288 460h4M190 461h4M284 461h4M194 462h4M280 462h4M198 463h6M274 463h6M204 464h8M266 464h8M212 465h16M250 465h16M228 466h22"/></g>
<g id="cusps"><path stroke="#ffffff" d="M204 16h1M204 17h1M204 18h1M204 19h1M205 20h1M205 21h1M205 22h1M205 23h1M205 24h1M205 25h1M205 26h1M206 27h1M206 28h1M319 28h1M206 29h1M319 29h1M206 30h1M318 30h1M206 31h1M318 31h1M206 32h1M317 32h1M207 33h1M317 33h1M207 34h1M317 34h1M207 35h1M316 35h1M207 36h1M316 36h1M207 37h1M316 37h1M207 38h1M315 38h1M207 39h1M315 39h1M208 40h1M314 40h1M208 41h1M314 41h1M208 42h1M314 42h1M208 43h1M313 43h1M208 44h1M313 44h1M208 45h1M313 45h1M208 46h1M312 46h1M209 47h1M312 47h1M209 48h1M311 48h1M209 49h1M311 49h1M209 50h1M311 50h1M310 51h1M310 52h1M310 53h1M309 54h1M309 55h1M308 56h1M308 57h1M308 58h1M307 59h1M307 60h1M230 61h1M230 62h1M230 63h1M96 64h1M230 64h1M97 65h1M230 65h1M98 66h1M230 66h1M99 67h1M230 67h1M99 68h1M230 68h1M100 69h1M230 69h1M101 70h1M230 70h1M102 71h1M230 71h1M103 72h1M231 72h1M104 73h1M231 73h1M104 74h1M231 74h1M105 75h1M231 75h1M106 76h1M231 76h1M107 77h1M231 77h1M108 78h1M231 78h1M109 79h1M231 79h1M110 80h1M231 80h1M110 81h1M231 81h1M111 82h1M231 82h1M112 83h1M231 83h1M113 84h1M114 85h1M115 86h1M330 86h1M115 87h1M329 87h1M116 88h1M329 88h1M117 89h1M328 89h1M118 90h1M327 90h1M327 91h1M326 92h1M326 93h1M325 94h1M134 95h1M324 95h1M135 96h1M324 96h1M414 96h1M136 97h1M323 97h1M413 97h1M136 98h1M322 98h1M412 98h1M137 99h1M322 99h1M410 99h2M138 100h1M321 100h1M409 100h1M139 101h1M321 101h1M408 101h1M139 102h1M320 102h1M407 102h1M140 103h1M319 103h1M406 103h1M141 104h1M319 104h1M404 104h2M142 105h1M318 105h1M403 105h1M143 106h1M402 106h1M143 107h1M401 107h1M144 108h1M400 108h1M145 109h1M399 109h1M146 110h1M397 110h2M146 111h1M396 111h1M147 112h1M395 112h1M148 113h1M394 113h1M393 114h1M391 115h2M390 116h1M389 117h1M388 118h1M397 156h1M395 157h2M393 158h2M28 159h2M391 159h2M30 160h2M389 160h2M32 161h3M387 161h2M35 162h3M386 162h1M38 163h2M384 163h2M40 164h3M382 164h2M43 165h3M77 165h2M380 165h2M46 166h2M79 166h2M378 166h2M48 167h3M81 167h2M377 167h1M51 168h3M83 168h2M54 169h2M85 169h2M56 170h3M87 170h3M59 171h2M90 171h2M92 172h2M94 173h2M96 174h2M459 204h4M452 205h7M445 206h7M439 207h6M432 208h7M428 209h4M60 239h24M395 239h24M47 269h4M40 270h7M33 271h7M27 272h6M20 273h7M16 274h4M381 304h2M383 305h2M385 306h2M387 307h2M418 307h2M389 308h2M420 308h2M391 309h3M422 309h3M394 310h2M425 310h3M101 311h1M396 311h2M428 311h2M99 312h2M398 312h2M430 312h3M97 313h2M400 313h2M433 313h3M95 314h2M436 314h2M93 315h2M438 315h3M91 316h2M441 316h3M90 317h1M444 317h2M88 318h2M446 318h3M86 319h2M449 319h2M84 320h2M82 321h2M81 322h1M90 360h1M89 361h1M88 362h1M86 363h2M85 364h1M84 365h1M330 365h1M83 366h1M331 366h1M82 367h1M332 367h1M80 368h2M332 368h1M79 369h1M333 369h1M78 370h1M334 370h1M77 371h1M335 371h1M76 372h1M335 372h1M75 373h1M160 373h1M336 373h1M73 374h2M159 374h1M337 374h1M72 375h1M159 375h1M338 375h1M71 376h1M158 376h1M339 376h1M70 377h1M157 377h1M339 377h1M69 378h1M157 378h1M340 378h1M67 379h2M156 379h1M341 379h1M66 380h1M156 380h1M342 380h1M65 381h1M155 381h1M342 381h1M64 382h1M154 382h1M343 382h1M154 383h1M344 383h1M153 384h1M152 385h1M152 386h1M151 387h1M151 388h1M360 388h1M150 389h1M361 389h1M149 390h1M362 390h1M149 391h1M363 391h1M148 392h1M363 392h1M364 393h1M365 394h1M247 395h1M366 395h1M247 396h1M367 396h1M247 397h1M368 397h1M247 398h1M368 398h1M247 399h1M369 399h1M247 400h1M370 400h1M247 401h1M371 401h1M247 402h1M372 402h1M247 403h1M373 403h1M247 404h1M374 404h1M247 405h1M374 405h1M248 406h1M375 406h1M248 407h1M376 407h1M248 408h1M377 408h1M248 409h1M378 409h1M248 410h1M379 410h1M248 411h1M379 411h1M248 412h1M380 412h1M248 413h1M381 413h1M248 414h1M382 414h1M248 415h1M248 416h1M248 417h1M171 418h1M171 419h1M170 420h1M170 421h1M169 422h1M169 423h1M169 424h1M168 425h1M168 426h1M168 427h1M167 428h1M269 428h1M167 429h1M269 429h1M166 430h1M269 430h1M166 431h1M269 431h1M166 432h1M270 432h1M165 433h1M270 433h1M165 434h1M270 434h1M165 435h1M270 435h1M164 436h1M270 436h1M164 437h1M270 437h1M163 438h1M270 438h1M163 439h1M271 439h1M163 440h1M271 440h1M162 441h1M271 441h1M162 442h1M271 442h1M162 443h1M271 443h1M161 444h1M271 444h1M161 445h1M272 445h1M160 446h1M272 446h1M160 447h1M272 447h1M160 448h1M272 448h1M159 449h1M272 449h1M159 450h1M272 450h1M272 451h1M273 452h1M273 453h1M273 454h1M273 455h1M273 456h1M273 457h1M273 458h1M274 459h1M274 460h1M274 461h1M274 462h1"/><path stroke="#808080" d="M317 107h1M316 109h1M315 111h1M314 113h1M149 115h1M313 115h1M150 117h1M311 117h1M152 119h1M310 119h1M153 121h1M309 121h1M155 123h1M308 123h1M156 125h1M307 125h1M157 127h1M306 127h1M159 129h1M304 129h1M160 131h1M303 131h1M162 133h1M302 133h1M163 135h1M301 135h1M165 137h1M300 137h1M166 139h1M298 139h1M168 141h1M297 141h1M169 143h1M296 143h1M171 145h1M295 145h1M172 147h1M294 147h1M173 149h1M292 149h1M175 151h1M291 151h1M176 153h1M290 153h1M178 155h1M289 155h1M179 157h1M288 157h1M181 159h1M287 159h1M182 161h1M285 161h1M184 163h1M284 163h1M185 165h1M283 165h1M187 167h1M282 167h1M375 168h1M188 169h1M281 169h1M373 169h1M371 170h1M189 171h1M279 171h1M369 171h1M367 172h1M191 173h1M278 173h1M365 173h1M363 174h1M99 175h1M192 175h1M277 175h1M361 175h1M101 176h1M359 176h1M103 177h1M194 177h1M276 177h1M357 177h1M105 178h1M355 178h1M107 179h1M195 179h1M275 179h1M353 179h1M109 180h1M351 180h1M111 181h1M197 181h1M273 181h1M349 181h1M113 182h1M347 182h1M115 183h1M198 183h1M272 183h1M345 183h1M117 184h1M343 184h1M119 185h1M121 185h1M200 185h1M271 185h1M341 185h1M123 186h1M339 186h1M125 187h1M201 187h1M270 187h1M337 187h1M127 188h1M129 189h1M203 189h1M269 189h1M335 189h1M131 190h1M133 191h1M204 191h1M268 191h1M331 191h1M135 192h1M329 192h1M137 193h1M206 193h1M266 193h1M327 193h1M139 194h1M325 194h1M141 195h1M143 195h1M207 195h1M265 195h1M323 195h1M145 196h1M321 196h1M147 197h1M208 197h1M264 197h1M149 198h1M317 198h1M151 199h1M210 199h1M263 199h1M315 199h1M153 200h1M313 200h1M155 201h1M211 201h1M262 201h1M311 201h1M157 202h1M309 202h1M159 203h1M213 203h1M260 203h1M307 203h1M161 204h1M305 204h1M163 205h1M165 205h1M214 205h1M259 205h1M303 205h1M167 206h1M301 206h1M169 207h1M216 207h1M258 207h1M299 207h1M171 208h1M173 209h1M217 209h1M257 209h1M297 209h1M175 210h1M295 210h1M177 211h1M219 211h1M256 211h1M293 211h1M179 212h1M291 212h1M181 213h1M220 213h1M254 213h1M289 213h1M183 214h1M185 214h1M287 214h1M187 215h1M222 215h1M253 215h1M285 215h1M189 216h1M283 216h1M191 217h1M223 217h1M252 217h1M281 217h1M193 218h1M279 218h1M195 219h1M224 219h1M251 219h1M277 219h1M197 220h1M275 220h1M199 221h1M226 221h1M250 221h1M273 221h1M201 222h1M271 222h1M203 223h1M227 223h1M249 223h1M269 223h1M205 224h1M207 224h1M267 224h1M209 225h1M229 225h1M247 225h1M265 225h1M211 226h1M263 226h1M213 227h1M230 227h1M246 227h1M261 227h1M215 228h1M259 228h1M217 229h1M232 229h1M245 229h1M219 230h1M257 230h1M221 231h1M233 231h1M244 231h1M255 231h1M223 232h1M253 232h1M225 233h1M251 233h1M227 234h1M229 234h1M249 234h1M231 235h1M241 235h1M247 235h1M233 236h1M245 236h1M235 237h1M238 237h1M240 237h1M243 237h1M237 238h1M241 238h1M239 239h1M237 240h1M241 240h1M235 241h1M238 241h1M240 241h1M243 241h1M233 242h1M245 242h1M231 243h1M242 243h1M247 243h1M229 244h1M249 244h1M251 244h1M235 245h1M243 245h1M253 245h1M255 246h1M223 247h1M234 247h1M245 247h1M257 247h1M221 248h1M259 248h1M233 249h1M246 249h1M261 249h1M219 250h1M263 250h1M217 251h1M232 251h1M248 251h1M265 251h1M215 252h1M267 252h1M213 253h1M231 253h1M249 253h1M269 253h1M211 254h1M271 254h1M273 254h1M209 255h1M229 255h1M251 255h1M275 255h1M207 256h1M277 256h1M205 257h1M228 257h1M252 257h1M279 257h1M203 258h1M281 258h1M201 259h1M227 259h1M254 259h1M283 259h1M199 260h1M285 260h1M197 261h1M226 261h1M255 261h1M287 261h1M195 262h1M289 262h1M193 263h1M225 263h1M256 263h1M291 263h1M191 264h1M293 264h1M295 264h1M189 265h1M224 265h1M258 265h1M297 265h1M187 266h1M299 266h1M185 267h1M222 267h1M259 267h1M301 267h1M183 268h1M303 268h1M181 269h1M221 269h1M261 269h1M305 269h1M307 270h1M179 271h1M220 271h1M262 271h1M309 271h1M177 272h1M311 272h1M175 273h1M219 273h1M264 273h1M313 273h1M315 273h1M173 274h1M317 274h1M171 275h1M218 275h1M265 275h1M319 275h1M169 276h1M321 276h1M167 277h1M216 277h1M267 277h1M323 277h1M165 278h1M325 278h1M163 279h1M215 279h1M268 279h1M327 279h1M161 280h1M329 280h1M159 281h1M214 281h1M270 281h1M331 281h1M157 282h1M333 282h1M155 283h1M213 283h1M271 283h1M335 283h1M337 283h1M153 284h1M151 285h1M212 285h1M272 285h1M149 286h1M343 286h1M147 287h1M210 287h1M274 287h1M345 287h1M145 288h1M347 288h1M143 289h1M209 289h1M349 289h1M351 290h1M141 291h1M208 291h1M277 291h1M353 291h1M139 292h1M355 292h1M137 293h1M207 293h1M278 293h1M357 293h1M359 293h1M135 294h1M361 294h1M133 295h1M206 295h1M280 295h1M363 295h1M131 296h1M365 296h1M129 297h1M205 297h1M281 297h1M367 297h1M127 298h1M369 298h1M125 299h1M203 299h1M283 299h1M371 299h1M123 300h1M373 300h1M121 301h1M202 301h1M284 301h1M375 301h1M119 302h1M377 302h1M117 303h1M201 303h1M286 303h1M379 303h1M115 304h1M113 305h1M200 305h1M287 305h1M111 306h1M109 307h1M199 307h1M107 308h1M105 309h1M197 309h1M290 309h1M103 310h1M196 311h1M291 311h1M195 313h1M293 313h1M194 315h1M294 315h1M193 317h1M296 317h1M191 319h1M297 319h1M190 321h1M299 321h1M189 323h1M300 323h1M188 325h1M302 325h1M187 327h1M303 327h1M186 329h1M305 329h1M184 331h1M306 331h1M183 333h1M307 333h1M182 335h1M309 335h1M181 337h1M310 337h1M180 339h1M312 339h1M178 341h1M313 341h1M177 343h1M315 343h1M176 345h1M316 345h1M175 347h1M318 347h1M174 349h1M319 349h1M172 351h1M321 351h1M171 353h1M322 353h1M170 355h1M323 355h1M169 357h1M325 357h1M168 359h1M326 359h1M167 361h1M328 361h1M329 363h1M164 365h1M163 367h1M162 369h1M161 371h1"/></g>
<g id="signs"><path stroke="#ff0000" d="M178 34h3M176 35h2M181 35h2M176 36h1M182 36h1M175 37h1M183 37h1M175 38h1M179 38h1M183 38h1M175 39h1M183 39h1M152 40h5M176 40h1M182 40h1M151 41h1M157 41h1M176 41h2M181 41h2M150 42h1M158 42h1M178 42h3M149 43h1M159 43h1M148 44h1M160 44h1M148 45h1M160 45h1M148 46h1M160 46h1M148 47h1M160 47h1M148 48h1M160 48h1M149 49h1M159 49h1M150 50h1M158 50h1M150 51h1M158 51h1M146 52h1M150 52h1M158 52h1M147 53h1M149 53h1M159 53h1M148 54h1M160 54h1M161 55h1M162 56h1M442 252h3M452 252h3M441 253h1M445 253h1M451 253h1M455 253h1M440 254h1M446 254h1M450 254h1M456 254h1M440 255h1M446 255h1M450 255h1M456 255h1M440 256h1M446 256h1M450 256h1M456 256h1M441 257h1M447 257h1M449 257h1M455 257h1M442 258h1M447 258h1M449 258h1M454 258h1M447 259h1M449 259h1M447 260h3M448 261h1M448 262h1M448 263h1M448 264h1M448 265h1M448 266h1M448 267h1M448 268h1M445 283h3M446 284h2M445 285h1M447 285h1M441 286h2M444 286h1M440 287h1M443 287h1M439 288h1M444 288h1M439 289h1M444 289h1M440 290h1M443 290h1M441 291h2M98 387h1M92 388h2M97 388h1M94 389h1M97 389h1M94 390h1M97 390h1M93 391h1M97 391h1M93 392h1M97 392h1M92 393h1M97 393h1M92 394h8M97 395h1M120 401h5M123 402h2M122 403h1M124 403h1M121 404h1M124 404h1M120 405h1M124 405h1M119 406h1M110 407h1M118 407h1M111 408h1M117 408h1M112 409h1M116 409h1M113 410h1M115 410h1M114 411h1M113 412h1M115 412h1M112 413h1M116 413h1M111 414h1M117 414h1M110 415h1M118 415h1M109 416h1M108 417h1"/><path stroke="#ffff00" d="M61 108h1M65 108h1M69 108h1M62 109h1M64 109h1M66 109h1M68 109h1M70 109h1M63 110h1M67 110h1M71 110h1M75 110h1M63 111h1M67 111h1M71 111h2M74 111h2M63 112h1M67 112h1M71 112h1M73 112h1M75 112h1M63 113h1M67 113h1M71 113h1M75 113h1M63 114h1M67 114h1M71 114h1M75 114h1M63 115h1M67 115h1M71 115h1M75 115h1M63 116h1M67 116h1M71 116h1M75 116h1M63 117h1M67 117h1M71 117h1M75 117h1M63 118h1M67 118h1M71 118h1M75 118h1M63 119h1M67 119h1M71 119h1M75 119h1M63 120h1M67 120h1M71 120h1M75 120h1M63 121h1M67 121h1M72 121h1M74 121h1M63 122h1M67 122h1M73 122h1M72 123h1M74 123h1M71 124h1M75 124h1M424 146h1M436 146h1M425 147h1M435 147h1M425 148h1M435 148h1M426 149h2M433 149h2M428 150h5M426 151h2M433 151h2M425 152h1M435 152h1M425 153h1M435 153h1M424 154h1M436 154h1M424 155h1M436 155h1M424 156h1M436 156h1M424 157h1M436 157h1M424 158h1M436 158h1M425 159h1M435 159h1M425 160h1M435 160h1M426 161h2M433 161h2M428 162h5M439 175h3M438 176h1M442 176h1M438 177h1M442 177h1M438 178h1M442 178h1M439 179h3M440 180h1M438 181h5M440 182h1M440 183h1M34 187h3M33 188h1M37 188h1M33 189h1M37 189h1M33 190h1M37 190h1M34 191h3M35 192h1M33 193h5M35 194h1M35 195h1M190 439h1M188 440h5M212 440h1M218 440h1M222 440h3M190 441h1M212 441h1M218 441h2M221 441h1M225 441h1M190 442h1M192 442h2M210 442h3M218 442h1M220 442h1M226 442h1M190 443h2M194 443h1M212 443h1M217 443h1M219 443h1M226 443h1M190 444h1M194 444h1M212 444h1M216 444h1M220 444h1M226 444h1M190 445h1M193 445h1M212 445h1M216 445h1M221 445h1M225 445h1M190 446h1M193 446h1M212 446h1M216 446h1M222 446h3M194 447h1M212 447h1M216 447h1M223 447h1M212 448h1M216 448h1M224 448h1M213 449h1M215 449h1M225 449h1M214 450h1M226 450h1M214 451h1M226 451h1M214 452h1M226 452h1M214 453h1M226 453h1M214 454h1M226 454h1M225 455h1M224 456h1"/><path stroke="#00ff00" d="M356 61h1M370 61h1M357 62h1M369 62h1M358 63h11M360 64h1M366 64h1M360 65h1M366 65h1M360 66h1M366 66h1M360 67h1M366 67h1M360 68h1M366 68h1M360 69h1M366 69h1M360 70h1M366 70h1M360 71h1M366 71h1M360 72h1M366 72h1M360 73h1M366 73h1M360 74h1M366 74h1M358 75h11M357 76h1M369 76h1M356 77h1M370 77h1M381 83h1M385 83h1M382 84h3M381 85h1M385 85h1M381 86h1M385 86h1M381 87h1M385 87h1M382 88h3M383 89h1M381 90h5M85 91h1M89 91h1M383 91h1M86 92h3M85 93h1M89 93h1M85 94h1M89 94h1M85 95h1M89 95h1M86 96h3M87 97h1M85 98h5M87 99h1M28 214h5M27 215h1M33 215h1M26 216h1M34 216h1M26 217h1M34 217h1M26 218h1M34 218h1M27 219h1M33 219h1M22 220h7M32 220h7M22 224h17M320 422h1M326 422h1M332 422h1M319 423h2M325 423h2M331 423h1M318 424h1M320 424h1M324 424h1M326 424h1M330 424h1M318 425h1M321 425h1M324 425h1M327 425h1M330 425h1M318 426h1M322 426h1M324 426h1M328 426h1M330 426h1M317 427h1M322 427h2M328 427h2M316 428h1M322 428h1M328 428h1M320 432h1M326 432h1M332 432h1M319 433h2M325 433h2M331 433h1M318 434h1M320 434h1M324 434h1M326 434h1M330 434h1M318 435h1M321 435h1M324 435h1M327 435h1M330 435h1M296 436h1M302 436h1M318 436h1M322 436h1M324 436h1M328 436h1M330 436h1M297 437h1M301 437h1M317 437h1M322 437h2M328 437h2M297 438h1M299 438h1M301 438h1M316 438h1M322 438h1M328 438h1M297 439h5M297 440h1M299 440h1M301 440h1M296 441h1M299 441h1M302 441h1M298 442h3M298 443h1M300 443h1M299 444h1"/><path stroke="#0000ff" d="M258 23h5M255 24h3M263 24h1M254 25h1M264 25h3M253 26h1M263 26h1M267 26h1M252 27h1M262 27h1M268 27h1M262 28h1M268 28h1M254 29h3M262 29h1M268 29h1M253 30h1M257 30h1M263 30h1M267 30h1M252 31h1M258 31h1M264 31h3M285 31h3M252 32h1M258 32h1M284 32h1M288 32h2M252 33h1M258 33h1M268 33h1M285 33h1M289 33h1M253 34h1M257 34h1M267 34h1M286 34h1M290 34h1M254 35h3M266 35h1M286 35h1M290 35h1M257 36h1M263 36h3M286 36h1M290 36h1M258 37h5M285 37h1M289 37h1M284 38h1M288 38h2M285 39h3M35 295h1M38 295h1M41 295h1M35 296h1M37 296h1M39 296h1M41 296h1M35 297h1M38 297h1M41 297h1M36 298h1M40 298h1M37 299h3M38 300h1M36 301h5M38 302h1M38 303h1M40 316h1M44 316h1M48 316h1M41 317h1M43 317h1M45 317h1M47 317h1M49 317h1M42 318h1M46 318h1M50 318h1M42 319h1M46 319h1M50 319h1M42 320h1M46 320h1M50 320h1M42 321h1M46 321h1M50 321h1M42 322h1M46 322h1M50 322h1M42 323h1M46 323h1M50 323h1M42 324h1M46 324h1M50 324h1M42 325h1M46 325h1M50 325h1M42 326h1M46 326h1M50 326h1M42 327h1M46 327h1M50 327h1M55 327h1M42 328h1M46 328h1M50 328h1M54 328h3M42 329h1M46 329h1M50 329h1M55 329h1M42 330h1M46 330h1M50 330h1M55 330h1M51 331h1M54 331h1M52 332h2M401 354h1M417 354h1M402 355h1M416 355h1M403 356h1M415 356h1M404 357h1M414 357h1M404 358h1M414 358h1M405 359h1M413 359h1M405 360h1M413 360h1M405 361h1M413 361h1M401 362h17M405 363h1M413 363h1M405 364h1M413 364h1M405 365h1M413 365h1M404 366h1M414 366h1M404 367h1M414 367h1M403 368h1M415 368h1M402 369h1M416 369h1M401 370h1M417 370h1M388 379h1M391 379h1M394 379h1M387 380h2M390 380h3M394 380h2M388 381h1M391 381h1M394 381h1M389 382h1M391 382h1M393 382h1M390 383h3M391 384h1M389 385h5M391 386h1M391 387h1"/></g>
<g id="houses"><path stroke="#ff0000" d="M305 80h1M299 81h2M304 81h1M301 82h1M304 82h1M301 83h1M304 83h1M300 84h1M304 84h1M300 85h1M304 85h1M299 86h1M304 86h1M299 87h8M304 88h1M74 255h3M75 256h2M74 257h1M76 257h1M70 258h2M73 258h1M69 259h1M72 259h1M68 260h1M73 260h1M68 261h1M73 261h1M69 262h1M72 262h1M70 263h2M353 357h3M351 358h2M356 358h2M351 359h1M357 359h1M350 360h1M358 360h1M350 361h1M354 361h1M358 361h1M350 362h1M358 362h1M351 363h1M357 363h1M351 364h2M356 364h2M353 365h3"/><path stroke="#ffff00" d="M206 70h1M204 71h5M206 72h1M206 73h1M208 73h2M206 74h2M210 74h1M206 75h1M210 75h1M206 76h1M209 76h1M206 77h1M209 77h1M210 78h1M405 215h3M404 216h1M408 216h1M404 217h1M408 217h1M404 218h1M408 218h1M405 219h3M406 220h1M404 221h5M406 222h1M406 223h1M102 333h3M101 334h1M105 334h1M101 335h1M105 335h1M101 336h1M105 336h1M102 337h3M103 338h1M101 339h5M103 340h1M103 341h1"/><path stroke="#00ff00" d="M121 113h1M127 113h1M122 114h1M126 114h1M122 115h1M124 115h1M126 115h1M122 116h5M122 117h1M124 117h1M126 117h1M121 118h1M124 118h1M127 118h1M123 119h3M123 120h1M125 120h1M124 121h1M396 288h1M400 288h1M397 289h3M396 290h1M400 290h1M396 291h1M400 291h1M396 292h1M400 292h1M397 293h3M398 294h1M396 295h5M398 296h1M174 390h1M178 390h1M175 391h3M174 392h1M178 392h1M174 393h1M178 393h1M174 394h1M178 394h1M175 395h3M176 396h1M174 397h5M176 398h1"/><path stroke="#0000ff" d="M372 137h1M375 137h1M378 137h1M372 138h1M374 138h1M376 138h1M378 138h1M372 139h1M375 139h1M378 139h1M373 140h1M377 140h1M374 141h3M375 142h1M373 143h5M375 144h1M375 145h1M77 182h1M80 182h1M83 182h1M76 183h2M79 183h3M83 183h2M77 184h1M80 184h1M83 184h1M78 185h1M80 185h1M82 185h1M79 186h3M80 187h1M78 188h5M80 189h1M80 190h1M269 400h3M268 401h1M272 401h2M269 402h1M273 402h1M270 403h1M274 403h1M270 404h1M274 404h1M270 405h1M274 405h1M269 406h1M273 406h1M268 407h1M272 407h2M269 408h3"/></g>
<g id="planets"><path stroke="#ffffff" d="M207 109h1M207 110h1M208 111h1M208 112h1M208 113h1M209 114h1M209 115h1M209 116h1M210 117h1M210 118h1M351 293h1M352 294h1M353 295h1M354 296h1M355 297h1M355 298h1M356 299h1M357 300h1M358 301h1M137 310h1M135 311h2M134 312h1M133 313h1M131 314h2M130 315h1M129 316h1M157 332h1M156 333h1M155 334h1M154 335h1M153 336h1M152 337h1M151 338h1M150 339h1M169 342h1M168 343h1M168 344h1M167 345h1M166 346h1M166 347h1M165 348h1M165 349h1M164 350h1M185 351h1M184 352h1M184 353h1M183 354h1M182 355h1M182 356h1M181 357h1M181 358h1M180 359h1M263 361h1M263 362h1M263 363h1M264 364h1M264 365h1M264 366h1M264 367h1M264 368h1M265 369h1M265 370h1M265 371h1"/><path stroke="#0000ff" d="M201 91h5M200 92h1M206 92h2M199 93h1M208 93h1M200 94h1M209 94h1M201 95h1M210 95h1M202 96h1M210 96h1M202 97h1M211 97h1M203 98h1M211 98h1M203 99h1M211 99h1M203 100h1M211 100h1M202 101h1M211 101h1M202 102h1M210 102h1M201 103h1M210 103h1M200 104h1M209 104h1M199 105h1M208 105h1M200 106h1M206 106h2M201 107h5M211 122h1M210 123h3M211 124h1M368 281h1M374 281h1M380 281h1M350 282h1M368 282h1M374 282h1M380 282h1M349 283h3M367 283h3M372 283h5M379 283h3M350 284h1M368 284h1M374 284h1M380 284h1M368 285h1M374 285h1M380 285h1M369 286h1M374 286h1M379 286h1M369 287h1M374 287h1M379 287h1M370 288h2M374 288h1M377 288h2M372 289h5M374 290h1M374 291h1M374 292h1M370 293h9M374 294h1M374 295h1M374 296h1M374 297h1M262 355h1M261 356h3M262 357h1M261 372h1M266 372h3M273 372h1M261 373h1M265 373h1M269 373h1M273 373h1M261 374h1M265 374h1M269 374h1M273 374h1M261 375h1M265 375h1M269 375h1M273 375h1M261 376h1M266 376h3M273 376h1M262 377h1M272 377h1M263 378h1M271 378h1M264 379h2M269 379h2M266 380h3M267 381h1M267 382h1M267 383h1M263 384h9M267 385h1M267 386h1M267 387h1M267 388h1"/><path stroke="#808080" d="M232 105h1M232 106h1M232 107h1M232 108h1M232 109h1M233 110h1M233 111h1M233 112h1M233 113h1M233 114h1M233 115h1M345 157h1M343 158h2M342 159h1M341 160h1M339 161h2M338 162h1M337 163h1M355 284h5M360 285h6"/><path stroke="#00ff00" d="M346 143h1M358 143h1M347 144h1M357 144h1M348 145h1M356 145h1M348 146h1M356 146h1M348 147h1M352 147h1M356 147h1M348 148h1M352 148h1M356 148h1M348 149h9M348 150h1M352 150h1M356 150h1M348 151h1M352 151h1M356 151h1M347 152h1M352 152h1M357 152h1M346 153h1M352 153h1M358 153h1M352 154h1M351 155h3M350 156h1M354 156h1M350 157h1M354 157h1M350 158h1M354 158h1M351 159h3M333 165h1M332 166h3M333 167h1M141 307h1M140 308h3M141 309h1M118 314h1M126 314h1M119 315h1M125 315h1M120 316h5M119 317h1M125 317h1M118 318h1M126 318h1M118 319h1M126 319h1M118 320h1M126 320h1M118 321h1M126 321h1M118 322h1M126 322h1M119 323h1M125 323h1M120 324h5M122 325h1M122 326h1M122 327h1M118 328h9M122 329h1M122 330h1"/><path stroke="#ffff00" d="M347 289h1M346 290h3M347 291h1M364 298h1M364 299h1M360 300h9M364 301h1M364 302h1M364 303h1M364 304h1M368 304h3M364 305h1M367 305h1M371 305h1M364 306h3M372 306h1M364 307h1M372 307h1M364 308h1M372 308h1M364 309h1M371 309h1M364 310h1M370 310h1M364 311h1M370 311h1M364 312h1M370 312h1M371 313h1M372 314h1M160 328h1M159 329h3M160 330h1M142 339h5M141 340h1M147 340h1M140 341h1M148 341h1M140 342h1M148 342h1M140 343h1M148 343h1M140 344h1M148 344h1M140 345h1M148 345h1M141 346h1M147 346h1M142 347h5M144 348h1M144 349h1M144 350h1M140 351h9M144 352h1M144 353h1M144 354h1M144 355h1"/><path stroke="#ff0000" d="M238 87h1M237 88h1M227 89h2M236 89h1M229 90h1M236 90h1M230 91h1M236 91h1M230 92h1M236 92h1M230 93h1M236 93h1M229 94h1M236 94h1M229 95h1M236 95h1M228 96h1M236 96h1M228 97h1M236 97h1M227 98h1M236 98h1M227 99h1M236 99h1M226 100h1M236 100h1M226 101h15M236 102h1M236 103h1M233 118h1M232 119h3M233 120h1M172 337h1M171 338h3M172 339h1M187 346h1M186 347h3M187 348h1M157 350h5M155 351h2M162 351h2M154 352h1M164 352h1M153 353h1M165 353h1M152 354h1M166 354h1M152 355h1M166 355h1M151 356h1M167 356h1M151 357h1M167 357h1M151 358h1M159 358h1M167 358h1M151 359h1M167 359h1M151 360h1M167 360h1M179 360h6M152 361h1M166 361h1M183 361h2M152 362h1M166 362h1M182 362h1M184 362h1M153 363h1M165 363h1M181 363h1M184 363h1M154 364h1M164 364h1M180 364h1M184 364h1M155 365h2M162 365h2M179 365h1M184 365h1M157 366h5M171 366h5M178 366h1M170 367h1M176 367h2M169 368h1M177 368h1M168 369h1M178 369h1M168 370h1M178 370h1M168 371h1M178 371h1M168 372h1M178 372h1M168 373h1M178 373h1M169 374h1M177 374h1M170 375h1M176 375h1M171 376h5"/></g>
<g id="aspects"><path stroke="#00ffff" d="M237 126h1M216 128h1M241 128h1M220 130h1M245 130h1M224 131h1M249 131h1M228 133h1M253 133h1M232 134h1M257 135h1M236 136h1M240 137h1M261 137h1M244 138h1M265 139h1M248 140h1M252 141h1M269 141h1M256 143h1M273 143h1M260 144h1M277 144h1M264 146h1M281 146h1M268 147h1M272 148h1M285 148h1M276 150h1M289 150h1M280 151h1M293 152h1M284 153h1M288 154h1M297 154h1M292 155h1M301 156h1M296 157h1M305 157h1M300 158h1M309 159h1M304 160h1M308 161h1M313 161h1M312 163h1M317 163h1M316 164h1M320 165h2M324 167h2M328 168h1M329 169h2M330 170h1M330 171h1M330 172h1M331 173h1M331 174h1M331 175h1M331 176h1M331 177h1M331 178h1M331 179h1M331 180h2M332 181h1M332 182h1M332 183h1M332 184h1M332 185h1M332 186h1M333 187h1M333 188h1M332 189h2M333 190h1M333 191h1M333 192h1M333 193h1M334 194h1M333 195h2M334 196h1M334 197h1M333 198h2M334 199h1M334 200h1M333 201h1M335 201h1M335 202h1M335 203h1M334 204h2M335 205h1M335 206h1M334 207h2M336 208h1M336 209h1M334 210h1M336 210h1M336 211h1M336 212h1M335 213h2M336 214h1M337 215h1M335 216h1M337 216h1M337 217h1M337 218h1M335 219h1M337 219h1M337 220h1M337 221h1M336 222h1M338 222h1M338 223h1M338 224h1M336 225h1M338 225h1M338 226h1M338 227h1M336 228h1M338 228h1M339 229h1M339 230h1M337 231h1M339 231h1M339 232h1M339 233h1M337 234h1M339 234h1M339 235h1M340 236h1M337 237h1M340 237h1M340 238h1M340 239h1M338 240h1M340 240h1M340 241h1M340 242h1M338 243h1M341 243h1M341 244h1M341 245h1M338 246h1M341 246h1M341 247h1M341 248h1M339 249h1M341 249h1M342 250h1M342 251h1M339 252h1M342 252h1M342 253h1M342 254h1M339 255h1M342 255h1M342 256h1M343 257h1M340 258h1M343 258h1M343 259h1M343 260h1M340 261h1M343 261h1M343 262h1M343 263h1M340 264h1M344 264h1M344 265h1M344 266h1M341 267h1M344 267h1M344 268h1M344 269h1M341 270h1M344 270h1M345 271h1M345 272h1M341 273h1M345 273h1M345 274h1M345 275h1M342 276h1M345 276h1M345 277h1M346 278h1M342 279h1M346 279h1M346 280h1M346 281h1M342 282h1M344 283h1M342 284h1M343 285h1M340 286h1M332 293h1M330 294h1M328 296h1M326 298h1M324 299h1M322 301h1M320 303h1M318 304h1M316 306h1M314 308h1M312 309h1M310 311h1M308 313h1M306 314h1M304 316h1M302 318h1M300 319h1M298 321h1M296 323h1M294 324h1M292 326h1M290 328h1M288 329h1M286 331h1M284 333h1M282 334h1M280 336h1M278 338h1M276 339h1M274 341h1M272 343h1M270 344h1M268 346h1M266 348h1M264 349h1M262 351h1"/><path stroke="#00ff00" d="M233 124h1M233 125h2M234 126h1M212 127h1M232 127h1M235 127h1M236 128h1M231 129h1M236 129h1M211 130h1M215 130h1M237 130h1M230 131h1M238 131h1M238 132h2M211 133h1M217 133h1M229 133h1M239 133h1M240 134h1M228 135h1M240 135h1M210 136h1M220 136h1M241 136h2M227 137h1M242 137h1M242 138h1M209 139h1M222 139h1M226 139h1M243 139h1M244 140h2M225 141h1M244 141h1M208 142h1M225 142h1M245 142h1M224 143h1M246 143h1M246 144h2M208 145h1M223 145h1M228 145h1M247 145h1M248 146h1M222 147h1M248 147h1M207 148h1M230 148h1M249 148h2M221 149h1M250 149h1M250 150h1M206 151h1M220 151h1M233 151h1M251 151h1M252 152h2M219 153h1M252 153h1M205 154h1M235 154h1M253 154h1M218 155h1M254 155h1M254 156h1M256 156h1M205 157h1M217 157h1M238 157h1M255 157h1M256 158h1M216 159h1M256 159h1M204 160h1M241 160h1M257 160h1M259 160h1M215 161h1M258 161h1M258 162h1M203 163h1M214 163h1M243 163h1M259 163h1M260 164h1M262 164h1M213 165h1M261 165h1M202 166h1M246 166h1M261 166h1M212 167h1M262 167h1M263 168h1M265 168h1M202 169h1M211 169h1M249 169h1M263 169h1M264 170h1M210 171h1M265 171h1M329 171h1M201 172h1M251 172h1M265 172h1M268 172h1M209 173h1M266 173h1M328 173h1M267 174h1M200 175h1M208 175h1M254 175h1M267 175h1M328 175h1M268 176h1M270 176h1M207 177h1M269 177h1M327 177h1M199 178h1M256 178h1M269 178h1M206 179h1M270 179h1M326 179h1M271 180h1M273 180h1M199 181h1M205 181h1M259 181h1M271 181h1M325 181h1M272 182h1M204 183h1M273 183h1M325 183h1M198 184h1M262 184h1M273 184h1M276 184h1M203 185h1M274 185h1M324 185h1M275 186h1M197 187h1M202 187h1M264 187h1M275 187h1M323 187h1M276 188h1M279 188h1M201 189h1M277 189h1M322 189h1M196 190h1M267 190h1M277 190h1M200 191h1M278 191h1M322 191h1M279 192h1M282 192h1M196 193h1M199 193h1M269 193h1M279 193h1M321 193h1M280 194h1M198 195h1M281 195h1M320 195h1M195 196h1M272 196h1M281 196h1M285 196h1M198 197h1M282 197h1M319 197h1M283 198h1M194 199h1M197 199h1M275 199h1M283 199h1M319 199h1M284 200h1M288 200h1M196 201h1M285 201h1M318 201h1M193 202h1M277 202h1M285 202h1M195 203h1M286 203h1M317 203h1M287 204h1M291 204h1M193 205h2M280 205h1M287 205h1M316 205h1M288 206h1M193 207h1M289 207h1M316 207h1M192 208h1M282 208h1M289 208h1M293 208h1M192 209h1M290 209h1M315 209h1M291 210h1M191 211h1M285 211h1M291 211h1M314 211h1M292 212h1M296 212h1M190 213h1M293 213h1M313 213h1M190 214h1M288 214h1M293 214h1M189 215h1M294 215h1M313 215h1M295 216h1M299 216h1M188 217h1M190 217h1M290 217h1M295 217h1M312 217h1M296 218h1M187 219h1M297 219h1M311 219h1M189 220h1M293 220h1M297 220h1M302 220h1M186 221h1M298 221h1M310 221h1M299 222h1M185 223h1M188 223h1M296 223h1M299 223h1M310 223h1M300 224h1M305 224h1M184 225h1M301 225h1M309 225h1M187 226h1M298 226h1M301 226h1M183 227h1M302 227h1M308 227h1M303 228h1M308 228h1M182 229h1M187 229h1M301 229h1M303 229h1M307 229h1M304 230h1M181 231h1M305 231h1M307 231h1M186 232h1M303 232h1M305 232h1M311 232h1M180 233h1M306 233h1M307 234h1M179 235h1M185 235h1M305 235h3M308 236h1M314 236h1M178 237h1M304 237h1M309 237h1M185 238h1M309 238h1M177 239h1M304 239h1M310 239h1M311 240h1M316 240h1M176 241h1M184 241h1M303 241h1M311 241h1M312 242h1M175 243h1M302 243h1M313 243h1M183 244h1M313 244h2M319 244h1M174 245h1M301 245h1M314 245h1M315 246h1M173 247h1M182 247h1M301 247h1M316 247h1M316 248h1M322 248h1M172 249h1M300 249h1M317 249h1M182 250h1M318 250h2M171 251h1M299 251h1M318 251h1M319 252h1M325 252h1M170 253h1M181 253h1M298 253h1M320 253h1M322 253h1M320 254h1M169 255h1M298 255h1M321 255h1M180 256h1M322 256h1M324 256h1M328 256h1M168 257h1M297 257h1M322 257h1M323 258h1M167 259h1M179 259h1M296 259h1M324 259h1M327 259h1M324 260h1M331 260h1M166 261h1M295 261h1M325 261h1M179 262h1M326 262h1M329 262h1M165 263h1M295 263h1M326 263h1M327 264h1M334 264h1M164 265h1M178 265h1M294 265h1M328 265h1M332 265h1M328 266h1M163 267h1M293 267h1M329 267h1M177 268h1M330 268h1M335 268h1M337 268h1M163 269h1M292 269h1M330 269h1M331 270h1M162 271h1M176 271h1M292 271h1M332 271h1M337 271h1M332 272h1M340 272h1M161 273h1M291 273h1M333 273h1M176 274h1M334 274h1M340 274h1M160 275h1M290 275h1M334 275h1M335 276h1M159 277h1M175 277h1M289 277h1M336 277h1M343 277h1M336 278h1M158 279h1M289 279h1M337 279h1M174 280h1M338 280h1M345 280h1M157 281h1M288 281h1M338 281h1M343 281h1M345 281h1M335 282h1M337 282h1M339 282h1M341 282h1M156 283h1M173 283h1M287 283h1M327 283h1M329 283h1M331 283h1M333 283h1M340 283h1M317 284h1M319 284h1M321 284h1M323 284h1M325 284h1M340 284h1M155 285h1M286 285h1M309 285h1M311 285h1M313 285h1M315 285h1M341 285h1M173 286h1M301 286h1M303 286h1M305 286h1M307 286h1M342 286h1M154 287h1M286 287h1M293 287h1M295 287h1M297 287h1M299 287h1M342 287h1M285 288h1M287 288h1M289 288h1M291 288h1M338 288h6M153 289h1M172 289h1M275 289h1M277 289h1M279 289h1M281 289h1M283 289h1M285 289h1M326 289h12M267 290h1M269 290h1M271 290h1M273 290h1M314 290h12M152 291h1M259 291h1M261 291h1M263 291h1M265 291h1M284 291h1M303 291h11M171 292h1M251 292h1M253 292h1M255 292h1M257 292h1M291 292h12M151 293h1M243 293h1M245 293h1M247 293h1M249 293h1M279 293h12M233 294h1M235 294h1M237 294h1M239 294h1M241 294h1M268 294h11M150 295h1M170 295h1M225 295h1M227 295h1M229 295h1M231 295h1M256 295h12M282 295h1M217 296h1M219 296h1M221 296h1M223 296h1M244 296h12M149 297h1M209 297h1M211 297h1M213 297h1M215 297h1M233 297h11M282 297h1M170 298h1M201 298h1M203 298h1M205 298h1M207 298h1M221 298h12M148 299h1M193 299h1M195 299h1M197 299h1M199 299h1M210 299h11M281 299h1M183 300h1M185 300h1M187 300h1M189 300h1M191 300h1M198 300h12M147 301h1M169 301h1M175 301h1M177 301h1M179 301h1M181 301h1M186 301h12M280 301h1M167 302h1M169 302h1M171 302h1M173 302h1M175 302h11M146 303h1M159 303h1M161 303h1M163 303h12M279 303h1M151 304h12M168 304h1M145 305h6M279 305h1M167 307h1M278 307h1M277 309h1M167 310h1M166 313h1M276 313h1M275 315h1M165 316h1M274 317h1M164 319h1M273 319h1M273 321h1M164 322h1M272 323h1M271 325h1M270 327h1M270 329h1M269 331h1M268 333h1M267 335h1M267 337h1M266 339h1M265 341h1M264 343h1M264 345h1M263 347h1M262 349h1"/><path stroke="#ff0000" d="M342 283h1M339 284h1M336 285h1M333 286h1M330 287h1M327 288h1M339 289h3M336 290h3M321 291h1M334 291h2M318 292h1M331 292h3M315 293h1M328 293h3M312 294h1M325 294h3M309 295h1M322 295h3M319 296h3M306 297h1M316 297h3M303 298h1M314 298h2M300 299h1M311 299h3M297 300h1M308 300h3M294 301h1M305 301h3M291 302h1M302 302h3M299 303h3M288 304h1M296 304h3M285 305h1M294 305h2M282 306h1M291 306h3M279 307h1M288 307h3M276 308h1M285 308h3M273 309h1M282 309h3M279 310h3M270 311h1M276 311h3M267 312h1M274 312h2M264 313h1M271 313h3M261 314h1M268 314h3M258 315h1M265 315h3M255 316h1M262 316h3M259 317h3M252 318h1M257 318h2M249 319h1M254 319h3M246 320h1M251 320h3M243 321h1M248 321h3M240 322h1M245 322h3M237 323h1M242 323h3M239 324h3M234 325h1M237 325h2M231 326h1M234 326h3M228 327h1M231 327h3M225 328h1M228 328h3M222 329h1M225 329h3M219 330h1M222 330h3M219 331h3M216 332h3M213 333h4M210 334h4M207 335h4M204 336h4M201 337h4M199 338h3M197 339h2M194 340h3M191 341h3M189 342h2"/><path stroke="#0000ff" d="M212 129h1M213 131h1M213 133h1M214 135h1M214 137h1M215 139h1M215 141h1M215 143h1M216 145h1M216 147h1M217 149h1M217 151h1M218 153h1M219 157h1M219 159h1M219 161h1M220 163h1M220 165h1M221 167h1M221 169h1M329 170h1M222 171h1M327 171h1M222 173h1M325 173h1M323 174h1M222 175h1M321 176h1M223 177h1M319 177h1M223 179h1M317 179h1M315 180h1M224 181h1M313 181h1M224 183h1M311 183h1M309 184h1M225 185h1M307 186h1M225 187h1M305 187h1M226 189h1M303 189h1M301 190h1M226 191h1M299 192h1M226 193h1M297 193h1M227 195h1M295 195h1M293 196h1M227 197h1M291 198h1M228 199h1M289 199h1M228 201h1M287 201h1M229 203h1M283 204h1M229 205h1M281 205h1M279 206h1M229 207h1M277 208h1M230 209h1M275 209h1M230 211h1M273 211h1M271 212h1M231 213h1M269 214h1M231 215h1M267 215h1M232 217h1M265 217h1M263 218h1M232 219h1M261 220h1M232 221h1M259 221h1M233 223h1M257 223h1M255 224h1M233 225h1M253 226h1M234 227h1M251 227h1M234 229h1M249 229h1M247 230h1M235 231h1M245 231h1M235 233h1M243 233h1M241 234h1M236 235h1M239 236h1M236 237h2M235 239h2M233 240h1M237 241h1M231 242h1M229 243h1M237 243h1M227 245h1M238 245h1M225 246h1M238 247h1M223 248h1M221 249h1M239 249h1M219 251h1M239 251h1M217 252h1M239 253h1M215 254h1M213 255h1M240 255h1M211 256h1M240 257h1M209 258h1M207 259h1M241 259h1M205 261h1M241 261h1M203 262h1M242 263h1M201 264h1M199 265h1M242 265h1M197 267h1M242 267h1M195 268h1M243 269h1M193 270h1M191 271h1M243 271h1M189 273h1M244 273h1M187 274h1M244 275h1M185 276h1M183 277h1M245 277h1M181 279h1M245 279h1M179 280h1M177 281h1M246 281h1M175 283h1M246 283h1M173 284h1M246 285h1M171 286h1M169 287h1M247 287h1M167 289h1M247 289h1M165 290h1M248 291h1M163 292h1M161 293h1M248 293h1M159 295h1M249 295h1M157 296h1M249 297h1M155 298h1M153 299h1M249 299h1M151 301h1M250 301h1M149 302h1M250 303h1M147 304h1M251 305h1M251 307h1M252 309h1M252 311h1M253 313h1M253 315h1M253 317h1M254 321h1M255 323h1M255 325h1M256 327h1M256 329h1M256 331h1M257 333h1M257 335h1M258 337h1M258 339h1M259 341h1M259 343h1M259 345h1M260 347h1M260 349h1M261 351h1"/><path stroke="#ffff00" d="M346 282h1M344 285h1M163 325h1M167 328h1M171 331h1M175 334h1"/></g>
<g id="sideglyphs"><path stroke="#ff0000" d="M627 138h3M626 139h1M630 139h1M626 140h1M630 140h1M624 141h4M629 141h4M624 143h9M626 176h1M629 176h1M632 176h1M625 177h2M628 177h2M631 177h1M625 178h1M627 178h2M630 178h2M624 179h1M627 179h1M630 179h1M626 181h1M629 181h1M632 181h1M625 182h2M628 182h2M631 182h1M625 183h1M627 183h2M630 183h2M624 184h1M627 184h1M630 184h1M625 216h1M632 216h1M626 217h6M627 218h1M630 218h1M627 219h1M630 219h1M627 220h1M630 220h1M627 221h1M630 221h1M627 222h1M630 222h1M626 223h6M625 224h1M632 224h1M627 266h3M625 267h2M630 267h2M625 268h1M631 268h1M624 269h1M632 269h1M624 270h1M628 270h1M632 270h1M624 271h1M632 271h1M625 272h1M631 272h1M625 273h2M630 273h2M627 274h3M630 306h3M631 307h2M630 308h1M632 308h1M626 309h2M629 309h1M625 310h1M628 310h1M624 311h1M629 311h1M624 312h1M629 312h1M625 313h1M628 313h1M626 314h2M631 316h1M625 317h2M630 317h1M627 318h1M630 318h1M627 319h1M630 319h1M626 320h1M630 320h1M626 321h1M630 321h1M625 322h1M630 322h1M625 323h8M630 324h1"/><path stroke="#ffff00" d="M624 146h1M626 146h1M628 146h1M625 147h1M627 147h1M629 147h1M625 148h1M627 148h1M629 148h1M625 149h1M627 149h1M629 149h1M625 150h1M627 150h1M629 150h1M625 151h1M627 151h1M629 151h1M625 152h1M627 152h1M629 152h1M632 152h1M625 153h1M627 153h1M629 153h1M632 153h1M630 154h2M624 186h1M632 186h1M625 187h1M631 187h1M626 188h1M630 188h1M626 189h1M630 189h1M624 190h9M626 191h1M630 191h1M626 192h1M630 192h1M625 193h1M631 193h1M624 194h1M632 194h1M627 227h3M625 228h2M630 228h2M624 229h1M629 229h1M632 229h1M625 230h2M629 230h1M632 230h1M624 231h1M627 231h1M630 231h2M624 232h1M627 232h1M632 232h1M625 233h2M630 233h2M627 234h3M627 296h3M626 297h1M630 297h1M626 298h1M630 298h1M626 299h1M630 299h1M627 300h3M628 301h1M626 302h5M628 303h1M628 304h1M627 326h1M625 327h5M627 328h1M627 329h1M629 329h2M627 330h2M631 330h1M627 331h1M631 331h1M627 332h1M630 332h1M627 333h1M630 333h1M631 334h1"/><path stroke="#00ff00" d="M630 156h3M631 157h2M630 158h1M632 158h1M625 159h1M629 159h1M626 160h1M628 160h1M627 161h1M626 162h1M628 162h1M625 163h1M629 163h1M624 164h1M625 196h2M630 196h2M624 197h1M627 197h1M629 197h1M632 197h1M624 198h1M627 198h1M629 198h1M632 198h1M625 199h1M627 199h1M629 199h1M631 199h1M628 200h1M628 201h1M628 202h1M628 203h1M628 204h1M627 236h3M626 237h1M630 237h1M625 238h1M631 238h1M625 239h1M631 239h1M625 240h1M631 240h1M626 241h1M630 241h1M624 242h1M626 242h1M630 242h1M625 243h1M631 243h1M632 244h1M626 286h1M630 286h1M627 287h3M626 288h1M630 288h1M626 289h1M630 289h1M626 290h1M630 290h1M627 291h3M628 292h1M626 293h5M628 294h1M625 336h1M631 336h1M626 337h1M630 337h1M626 338h1M628 338h1M630 338h1M626 339h5M626 340h1M628 340h1M630 340h1M625 341h1M628 341h1M631 341h1M627 342h3M627 343h1M629 343h1M628 344h1"/><path stroke="#0000ff" d="M625 166h1M628 166h1M630 166h2M624 167h2M628 167h2M632 167h1M625 168h1M627 168h1M629 168h1M632 168h1M625 169h1M627 169h1M630 169h2M625 170h1M627 170h1M631 170h1M626 171h1M632 171h1M626 172h1M632 172h1M626 173h1M632 173h1M631 174h1M625 206h1M631 206h1M626 207h1M630 207h1M627 208h3M626 209h1M630 209h1M625 210h1M631 210h1M625 211h1M631 211h1M625 212h1M631 212h1M626 213h1M630 213h1M627 214h3M624 246h1M626 246h1M628 246h1M625 247h1M627 247h1M629 247h1M631 247h1M625 248h1M627 248h1M629 248h3M625 249h1M627 249h1M629 249h1M631 249h1M625 250h1M627 250h1M629 250h1M631 250h1M625 251h1M627 251h1M629 251h1M631 251h1M625 252h1M627 252h1M629 252h1M631 252h1M625 253h1M627 253h1M630 253h1M629 254h1M631 254h1M626 276h3M625 277h1M629 277h2M626 278h1M630 278h1M627 279h1M631 279h1M627 280h1M631 280h1M627 281h1M631 281h1M626 282h1M630 282h1M625 283h1M629 283h2M626 284h3M625 346h1M628 346h1M631 346h1M624 347h2M627 347h3M631 347h2M625 348h1M628 348h1M631 348h1M626 349h1M628 349h1M630 349h1M627 350h3M628 351h1M626 352h5M628 353h1M628 354h1M625 356h1M628 356h1M631 356h1M625 357h1M627 357h1M629 357h1M631 357h1M625 358h1M628 358h1M631 358h1M626 359h1M630 359h1M627 360h3M628 361h1M626 362h5M628 363h1M628 364h1"/></g>
</g>
<g>
<text transform="translate(76.5 283.8) scale(0.74 1)" fill="#ff0000" stroke="#ff0000" class="hn">1</text>
<text transform="translate(117.5 358.8) scale(0.74 1)" fill="#ffff00" stroke="#ffff00" class="hn">2</text>
<text transform="translate(199.5 406.8) scale(0.74 1)" fill="#00ff00" stroke="#00ff00" class="hn">3</text>
<text transform="translate(295.5 401.8) scale(0.74 1)" fill="#0000ff" stroke="#0000ff" class="hn">4</text>
<text transform="translate(369.5 349.8) scale(0.74 1)" fill="#ff0000" stroke="#ff0000" class="hn">5</text>
<text transform="translate(403.5 278.8) scale(0.74 1)" fill="#ffff00" stroke="#ffff00" class="hn">6</text>
<text transform="translate(402.5 203.8) scale(0.74 1)" fill="#00ff00" stroke="#00ff00" class="hn">7</text>
<text transform="translate(361.5 128.8) scale(0.74 1)" fill="#0000ff" stroke="#0000ff" class="hn">8</text>
<text transform="translate(279.5 80.8) scale(0.74 1)" fill="#ff0000" stroke="#ff0000" class="hn">9</text>
<text transform="translate(179.5 85.8) scale(0.74 1)" fill="#ffff00" stroke="#ffff00" class="hn">1</text>
<text transform="translate(187.2 85.8) scale(0.74 1)" fill="#ffff00" stroke="#ffff00" class="hn hz">0</text>
<text transform="translate(105.5 137.8) scale(0.74 1)" fill="#00ff00" stroke="#00ff00" class="hn">1</text>
<text transform="translate(113.2 137.8) scale(0.74 1)" fill="#00ff00" stroke="#00ff00" class="hn">1</text>
<text transform="translate(71.5 208.8) scale(0.74 1)" fill="#0000ff" stroke="#0000ff" class="hn">1</text>
<text transform="translate(79.2 208.8) scale(0.74 1)" fill="#0000ff" stroke="#0000ff" class="hn">2</text>
</g>
<g>
<text x="486" y="14" class="sb" xml:space="preserve"><tspan fill="#ffffff">Astrolog 5.41G</tspan></text>
<text x="486" y="24" class="sb" xml:space="preserve"><tspan fill="#c0c0c0">Chart of the Moment</tspan></text>
<text x="486" y="34" class="sb" xml:space="preserve"><tspan fill="#ffffff">Mon December 8, 2025</tspan></text>
<text x="486" y="44" class="sb" xml:space="preserve"><tspan fill="#ffffff"> 2:44:00am (ST -8:00 GMT)</tspan></text>
<text x="486" y="54" class="sb" xml:space="preserve"><tspan fill="#c0c0c0">San Francisco, CA</tspan></text>
<text x="486" y="64" class="sb" xml:space="preserve"><tspan fill="#c0c0c0">122°40'00"W 37°79'00"N</tspan></text>
<text x="486" y="74" class="sb" xml:space="preserve"><tspan fill="#c0c0c0">Placidus houses.</tspan></text>
<text x="486" y="84" class="sb" xml:space="preserve"><tspan fill="#c0c0c0">Tropical, Geocentric.</tspan></text>
<text x="486" y="94" class="sb" xml:space="preserve"><tspan fill="#ffffff">Julian Day = 2461017.9472</tspan></text>
<text x="486" y="104" class="sb" xml:space="preserve"><tspan fill="#c0c0c0">Obliquity = 23°26'09"</tspan></text>
<text x="486" y="114" class="sb" xml:space="preserve"><tspan fill="#c0c0c0">Sidereal time:  7:43:07</tspan></text>
<text x="486" y="124" class="sb" xml:space="preserve"><tspan fill="#c0c0c0">DeltaT =  95.1387</tspan></text>
<text x="486" y="144" class="sb" xml:space="preserve"><tspan fill="#ff0000"> 1st house: </tspan><tspan fill="#00ff00">20Lib52</tspan></text>
<text x="486" y="154" class="sb" xml:space="preserve"><tspan fill="#ffff00"> 2nd house: </tspan><tspan fill="#0000ff">18Sco41</tspan></text>
<text x="486" y="164" class="sb" xml:space="preserve"><tspan fill="#00ff00"> 3rd house: </tspan><tspan fill="#ff0000">20Sag06</tspan></text>
<text x="486" y="174" class="sb" xml:space="preserve"><tspan fill="#0000ff"> 4th house: </tspan><tspan fill="#ffff00">23Cap54</tspan></text>
<text x="486" y="184" class="sb" xml:space="preserve"><tspan fill="#ff0000"> 5th house: </tspan><tspan fill="#00ff00">26Aqu56</tspan></text>
<text x="486" y="194" class="sb" xml:space="preserve"><tspan fill="#ffff00"> 6th house: </tspan><tspan fill="#0000ff">26Pis15</tspan></text>
<text x="486" y="204" class="sb" xml:space="preserve"><tspan fill="#00ff00"> 7th house: </tspan><tspan fill="#ff0000">20Ari52</tspan></text>
<text x="486" y="214" class="sb" xml:space="preserve"><tspan fill="#0000ff"> 8th house: </tspan><tspan fill="#ffff00">18Tau41</tspan></text>
<text x="486" y="224" class="sb" xml:space="preserve"><tspan fill="#ff0000"> 9th house: </tspan><tspan fill="#00ff00">20Gem06</tspan></text>
<text x="486" y="234" class="sb" xml:space="preserve"><tspan fill="#ffff00">10th house: </tspan><tspan fill="#0000ff">23Can54</tspan></text>
<text x="486" y="244" class="sb" xml:space="preserve"><tspan fill="#00ff00">11th house: </tspan><tspan fill="#ff0000">26Leo56</tspan></text>
<text x="486" y="254" class="sb" xml:space="preserve"><tspan fill="#0000ff">12th house: </tspan><tspan fill="#ffff00">26Vir15</tspan></text>
<text x="486" y="274" class="sb" xml:space="preserve"><tspan fill="#ff0000"> Sun: </tspan><tspan fill="#ff0000">16Sag36</tspan><tspan fill="#ffffff"> </tspan><tspan fill="#c0c0c0"> + 0°00'</tspan></text>
<text x="486" y="284" class="sb" xml:space="preserve"><tspan fill="#0000ff">Moon: </tspan><tspan fill="#ff0000"> 4Leo41</tspan><tspan fill="#ffffff"> </tspan><tspan fill="#c0c0c0"> + 3°08'</tspan></text>
<text x="486" y="294" class="sb" xml:space="preserve"><tspan fill="#00ff00">Merc: </tspan><tspan fill="#0000ff">26Sco00</tspan><tspan fill="#ffffff"> </tspan><tspan fill="#c0c0c0"> + 2°17'</tspan></text>
<text x="486" y="304" class="sb" xml:space="preserve"><tspan fill="#ffff00">Venu: </tspan><tspan fill="#ff0000"> 9Sag34</tspan><tspan fill="#ffffff"> </tspan><tspan fill="#c0c0c0"> + 0°25'</tspan></text>
<text x="486" y="314" class="sb" xml:space="preserve"><tspan fill="#ff0000">Mars: </tspan><tspan fill="#ff0000">24Sag51</tspan><tspan fill="#ffffff"> </tspan><tspan fill="#c0c0c0"> - 0°43'</tspan></text>
<text x="486" y="324" class="sb" xml:space="preserve"><tspan fill="#ff0000">Jupi: </tspan><tspan fill="#0000ff">23Can59</tspan><tspan fill="#ffffff">R</tspan><tspan fill="#c0c0c0"> + 0°11'</tspan></text>
<text x="486" y="334" class="sb" xml:space="preserve"><tspan fill="#ffff00">Satu: </tspan><tspan fill="#0000ff">25Pis15</tspan><tspan fill="#ffffff"> </tspan><tspan fill="#c0c0c0"> - 2°20'</tspan></text>
<text x="486" y="344" class="sb" xml:space="preserve"><tspan fill="#00ff00">Uran: </tspan><tspan fill="#ffff00">28Tau45</tspan><tspan fill="#ffffff">R</tspan><tspan fill="#c0c0c0"> - 0°12'</tspan></text>
<text x="486" y="354" class="sb" xml:space="preserve"><tspan fill="#0000ff">Nept: </tspan><tspan fill="#0000ff">29Pis22</tspan><tspan fill="#ffffff">R</tspan><tspan fill="#c0c0c0"> - 1°21'</tspan></text>
<text x="486" y="364" class="sb" xml:space="preserve"><tspan fill="#0000ff">Plut: </tspan><tspan fill="#00ff00"> 2Aqu04</tspan><tspan fill="#ffffff"> </tspan><tspan fill="#c0c0c0"> - 3°46'</tspan></text>
<text x="486" y="384" class="sb" xml:space="preserve"><tspan fill="#c0c0c0">Fire: 4, Earth: 1,</tspan></text>
<text x="486" y="394" class="sb" xml:space="preserve"><tspan fill="#c0c0c0">Air : 1, Water: 4</tspan></text>
<text x="486" y="404" class="sb" xml:space="preserve"><tspan fill="#c0c0c0">Car: 1, Fix: 4, Mut: 5</tspan></text>
<text x="486" y="414" class="sb" xml:space="preserve"><tspan fill="#c0c0c0">Yang: 5, Yin: 5</tspan></text>
<text x="486" y="424" class="sb" xml:space="preserve"><tspan fill="#c0c0c0">M: 3, N: 7, A: 6, D: 4</tspan></text>
<text x="486" y="434" class="sb" xml:space="preserve"><tspan fill="#c0c0c0">Ang: 3, Suc: 5, Cad: 2</tspan></text>
<text x="486" y="444" class="sb" xml:space="preserve"><tspan fill="#c0c0c0">Learn: 3, Share: 7</tspan></text>
</g>
<path d="M0.5 0.5H639.5V479.5H0.5ZM479.5 0V480" stroke="#c0c0c0" fill="none" shape-rendering="crispEdges"/>
</svg>
</body></html>
